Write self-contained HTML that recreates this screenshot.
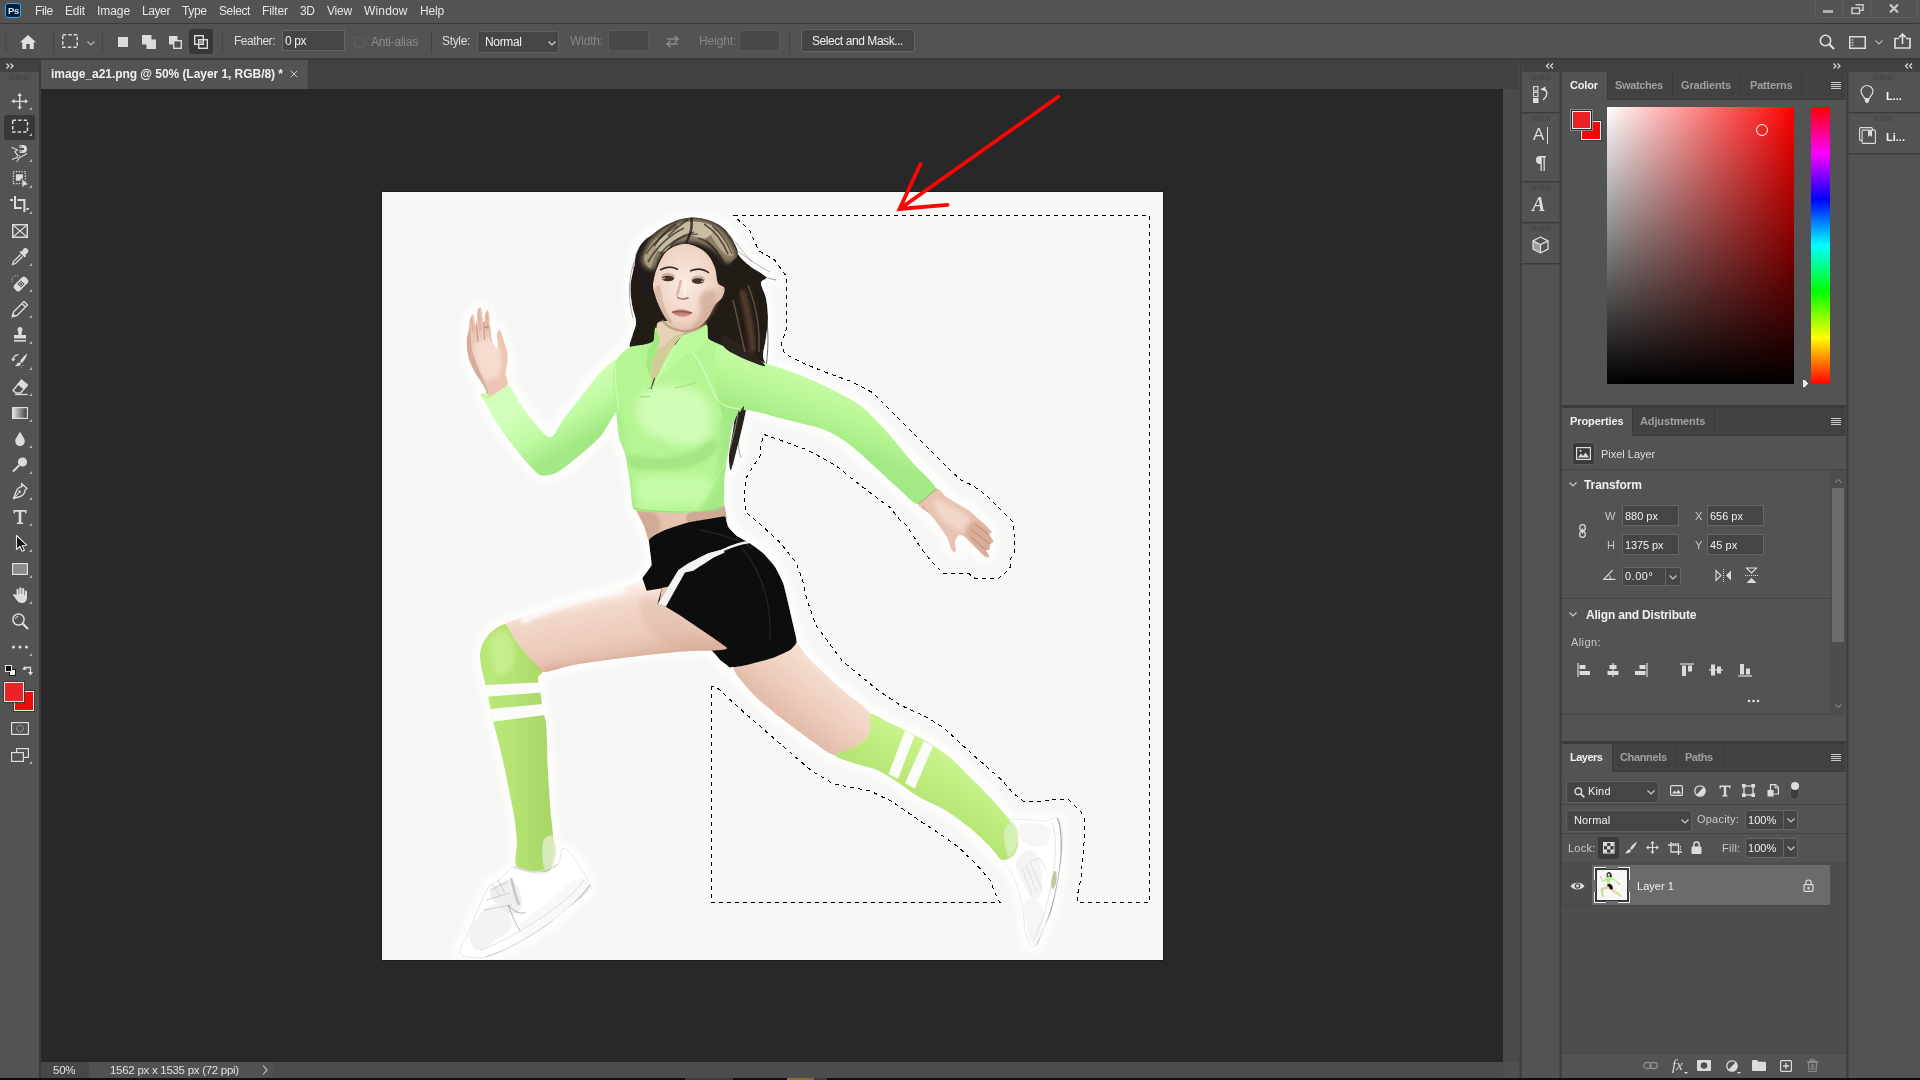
<!DOCTYPE html>
<html lang="en">
<head>
<meta charset="utf-8">
<title>image_a21.png @ 50% (Layer 1, RGB/8) *</title>
<style>
*{box-sizing:border-box;margin:0;padding:0}
html,body{width:1920px;height:1080px;overflow:hidden;background:#535353}
body{position:relative;font-family:"Liberation Sans","DejaVu Sans",sans-serif;font-size:12px;color:#dcdcdc;-webkit-font-smoothing:antialiased}
.a{position:absolute}
.t{position:absolute;white-space:nowrap;line-height:16px;height:16px;will-change:transform}
.b{font-weight:bold}
.dim{color:#8c8c8c}
.inp{position:absolute;background:#454545;border:1px solid #666}
.grip{position:absolute;height:5px;background:repeating-linear-gradient(90deg,#454545 0 1px,transparent 1px 2px)}
svg{position:absolute;overflow:visible}
/*SECTION-STYLES*/
</style>
</head>
<body>
<!-- ===== MENU BAR ===== -->
<div class="a" id="menubar" style="left:0;top:0;width:1920px;height:23px;background:#535353"></div>
<div class="a" style="left:0;top:23px;width:1920px;height:1px;background:#3a3a3a"></div>
<div class="a" style="left:5px;top:3px;width:16px;height:15px;background:#001e36;border:1px solid #31a8ff;border-radius:3px"></div>
<div class="t b" style="left:8px;top:3px;font-size:9.5px;line-height:15px;height:15px;color:#cfe9ff;letter-spacing:-0.3px">Ps</div>
<div class="t" style="left:35px;top:3px;color:#e6e6e6;letter-spacing:-0.41px">File</div>
<div class="t" style="left:65px;top:3px;color:#e6e6e6;letter-spacing:-0.17px">Edit</div>
<div class="t" style="left:97px;top:3px;color:#e6e6e6;letter-spacing:-0.07px">Image</div>
<div class="t" style="left:142px;top:3px;color:#e6e6e6;letter-spacing:-0.41px">Layer</div>
<div class="t" style="left:182px;top:3px;color:#e6e6e6;letter-spacing:-0.33px">Type</div>
<div class="t" style="left:219px;top:3px;color:#e6e6e6;letter-spacing:-0.39px">Select</div>
<div class="t" style="left:262px;top:3px;color:#e6e6e6;letter-spacing:-0.11px">Filter</div>
<div class="t" style="left:300px;top:3px;color:#e6e6e6;letter-spacing:-0.32px">3D</div>
<div class="t" style="left:327px;top:3px;color:#e6e6e6;letter-spacing:-0.20px">View</div>
<div class="t" style="left:364px;top:3px;color:#e6e6e6;letter-spacing:0.17px">Window</div>
<div class="t" style="left:420px;top:3px;color:#e6e6e6;letter-spacing:-0.17px">Help</div>
<div class="a" style="left:1815px;top:0;width:103px;height:18px;border:1px solid #5f5f5f;border-top:none;border-radius:0 0 4px 4px"></div>
<div class="a" style="left:1842px;top:0;width:1px;height:17px;background:#5f5f5f"></div>
<div class="a" style="left:1870px;top:0;width:1px;height:17px;background:#5f5f5f"></div>
<div class="a" style="left:1823px;top:10px;width:10px;height:3px;background:#b0b0b0"></div>
<svg style="left:1851px;top:4px" width="13" height="11" viewBox="0 0 13 11"><path d="M4.5 0.8h7.5v5.5h-2.5M1 4h7.5v5.500h-7.500z" fill="none" stroke="#c8c8c8" stroke-width="1.6"/></svg>
<svg style="left:1889px;top:4px" width="10" height="9" viewBox="0 0 10 9"><path d="M1 0.5L9 8.500M9 0.500L1 8.500" stroke="#c8c8c8" stroke-width="2.2" fill="none"/></svg>
<!--MENU-->

<!-- ===== OPTIONS BAR ===== -->
<div class="a" id="optbar" style="left:0;top:24px;width:1920px;height:35px;background:#535353"></div>
<div class="a" style="left:0;top:58px;width:1920px;height:2px;background:#3a3a3a"></div>

<div class="a" style="left:5px;top:32px;width:2px;height:20px;background:repeating-linear-gradient(180deg,#464646 0 1px,transparent 1px 2px)"></div>
<svg style="left:20px;top:35px" width="16" height="14" viewBox="0 0 16 14"><path d="M8 0L0 7.300h2.300V14h4V9h3.400v5h4V7.300H16z" fill="#e0e0e0"/></svg>
<div class="a" style="left:53px;top:30px;width:1px;height:23px;background:#454545"></div>
<svg style="left:62px;top:34px" width="16" height="14" viewBox="0 0 16 14"><rect x="0.750" y="0.750" width="14.500" height="12.500" fill="none" stroke="#dcdcdc" stroke-width="1.500" stroke-dasharray="3.500 2"/></svg>
<svg style="left:87px;top:41px" width="8" height="5" viewBox="0 0 8 5"><path d="M0.500 0.500L4 4l3.500-3.500" fill="none" stroke="#b4b4b4" stroke-width="1.200"/></svg>
<div class="a" style="left:102px;top:30px;width:1px;height:23px;background:#454545"></div>
<div class="a" style="left:118px;top:37px;width:10px;height:10px;background:#dcdcdc"></div>
<svg style="left:142px;top:35px" width="14" height="14" viewBox="0 0 14 14"><path d="M0 0h9.500v4.500H14V14H4.500V9.500H0z" fill="#dcdcdc"/></svg>
<svg style="left:169px;top:36px" width="13" height="13" viewBox="0 0 13 13"><path d="M0 0h8.500v4h-4.500v4.500H0z" fill="#dcdcdc"/><rect x="4.700" y="4.700" width="7.600" height="7.600" fill="none" stroke="#dcdcdc" stroke-width="1.400"/></svg>
<div class="a" style="left:189px;top:29px;width:24px;height:25px;background:#383838;border-radius:3px"></div>
<svg style="left:194px;top:35px" width="14" height="14" viewBox="0 0 14 14"><rect x="0.700" y="0.700" width="8.600" height="8.600" fill="none" stroke="#dcdcdc" stroke-width="1.400"/><rect x="4.700" y="4.700" width="8.600" height="8.600" fill="none" stroke="#dcdcdc" stroke-width="1.400"/><rect x="5.400" y="5.400" width="3.200" height="3.200" fill="#a0a0a0"/></svg>
<div class="a" style="left:222px;top:30px;width:1px;height:23px;background:#454545"></div>
<div class="t" style="left:234px;top:33px;letter-spacing:-0.46px">Feather:</div>
<div class="inp" style="left:282px;top:30px;width:63px;height:21px"></div>
<div class="t" style="left:285px;top:33px;color:#f0f0f0;letter-spacing:-0.42px">0 px</div>
<div class="a" style="left:354px;top:37px;width:11px;height:11px;border:1px solid #5e5e5e;border-radius:2px"></div>
<div class="t dim" style="left:371px;top:34px;letter-spacing:-0.24px">Anti-alias</div>
<div class="a" style="left:431px;top:30px;width:1px;height:23px;background:#454545"></div>
<div class="t" style="left:442px;top:33px;letter-spacing:-0.34px">Style:</div>
<div class="a" style="left:477px;top:31px;width:82px;height:22px;background:#454545;border:1px solid #606060;border-radius:3px"></div>
<div class="t" style="left:485px;top:34px;color:#f0f0f0;letter-spacing:-0.33px">Normal</div>
<svg style="left:548px;top:41px" width="8" height="5" viewBox="0 0 8 5"><path d="M0.500 0.500L4 4l3.500-3.500" fill="none" stroke="#d0d0d0" stroke-width="1.200"/></svg>
<div class="t dim" style="left:570px;top:33px;color:#868686;letter-spacing:-0.17px">Width:</div>
<div class="a" style="left:608px;top:30px;width:41px;height:21px;background:#484848;border:1px solid #5a5a5a"></div>
<svg style="left:665px;top:35px" width="15" height="13" viewBox="0 0 15 13"><path d="M2 4h11M9.500 0.800L13 4 9.500 7.200M13 9H2M5.500 5.800L2 9l3.500 3.200" fill="none" stroke="#8c8c8c" stroke-width="1.500"/></svg>
<div class="t dim" style="left:699px;top:33px;color:#868686;letter-spacing:-0.10px">Height:</div>
<div class="a" style="left:739px;top:30px;width:41px;height:21px;background:#484848;border:1px solid #5a5a5a"></div>
<div class="a" style="left:789px;top:30px;width:1px;height:23px;background:#454545"></div>
<div class="a" style="left:801px;top:29px;width:114px;height:23px;background:#454545;border:1px solid #646464;border-radius:3px"></div>
<div class="t" style="left:812px;top:33px;color:#f0f0f0;letter-spacing:-0.43px">Select and Mask...</div>
<svg style="left:1819px;top:34px" width="16" height="16" viewBox="0 0 16 16"><circle cx="6.500" cy="6.500" r="5.200" fill="none" stroke="#dcdcdc" stroke-width="1.600"/><path d="M10.300 10.300L15 15" stroke="#dcdcdc" stroke-width="2.200"/></svg>
<svg style="left:1849px;top:36px" width="17" height="13" viewBox="0 0 17 13"><rect x="0.750" y="0.750" width="15.500" height="11.500" fill="none" stroke="#dcdcdc" stroke-width="1.500"/><path d="M2.500 4h2M2.500 6.500h2M2.500 9h2" stroke="#dcdcdc" stroke-width="1.200"/></svg>
<svg style="left:1875px;top:40px" width="8" height="5" viewBox="0 0 8 5"><path d="M0.500 0.500L4 4l3.500-3.500" fill="none" stroke="#b4b4b4" stroke-width="1.200"/></svg>
<svg style="left:1894px;top:33px" width="17" height="16" viewBox="0 0 17 16"><path d="M5 5.500H1v9.500h15V5.500h-4" fill="none" stroke="#dcdcdc" stroke-width="1.700"/><path d="M8.500 11V1.500M5.300 4.300L8.500 1l3.200 3.300" fill="none" stroke="#dcdcdc" stroke-width="1.700"/></svg>
<!--OPTIONS-->

<!-- ===== TAB ROW / CANVAS ===== -->
<div class="a" style="left:0;top:60px;width:1920px;height:1020px;background:#424242"></div>
<div class="a" id="canvas" style="left:41px;top:89px;width:1462px;height:973px;background:#282828"></div>
<div class="a" style="left:41px;top:60px;width:267px;height:29px;background:#535353"></div>
<div class="a" style="left:308px;top:60px;width:1px;height:29px;background:#3c3c3c"></div>
<div class="t b" style="left:51px;top:66px;color:#f0f0f0;letter-spacing:-0.05px">image_a21.png @ 50% (Layer 1, RGB/8) *</div>
<svg style="left:290px;top:70px" width="8" height="8" viewBox="0 0 8 8"><path d="M0.800 0.800l6.400 6.400M7.200 0.800L0.800 7.200" stroke="#c8c8c8" stroke-width="1"/></svg>
<!--FIG-START-->
<div class="a" style="left:381px;top:191px;width:783px;height:770px;background:#1c1c1c"></div>
<svg style="left:382px;top:192px" width="781" height="768" viewBox="382 192 781 768">
<defs>
<filter id="b1" x="-10%" y="-10%" width="120%" height="120%"><feGaussianBlur stdDeviation="0.600"/></filter>
<filter id="b2" x="-20%" y="-20%" width="140%" height="140%"><feGaussianBlur stdDeviation="2"/></filter>
<filter id="b4" x="-30%" y="-30%" width="160%" height="160%"><feGaussianBlur stdDeviation="4"/></filter>
<filter id="b8" x="-30%" y="-30%" width="160%" height="160%"><feGaussianBlur stdDeviation="7"/></filter>
<linearGradient id="gTop" x1="0" y1="0" x2="1" y2="0.300"><stop offset="0" stop-color="#a8f088"/><stop offset="0.450" stop-color="#bdf99a"/><stop offset="1" stop-color="#a4ec84"/></linearGradient>
<linearGradient id="gArmR" gradientUnits="userSpaceOnUse" x1="800" y1="370" x2="780" y2="425"><stop offset="0" stop-color="#c6fca4"/><stop offset="0.500" stop-color="#b8f694"/><stop offset="1" stop-color="#a4ea84"/></linearGradient>
<linearGradient id="gArmL" gradientUnits="userSpaceOnUse" x1="540" y1="400" x2="570" y2="450"><stop offset="0" stop-color="#d2ffba"/><stop offset="0.550" stop-color="#bef9a0"/><stop offset="1" stop-color="#a2e884"/></linearGradient>
<linearGradient id="gThigh" gradientUnits="userSpaceOnUse" x1="600" y1="590" x2="615" y2="665"><stop offset="0" stop-color="#fdf3ee"/><stop offset="0.250" stop-color="#f2d7c9"/><stop offset="0.700" stop-color="#ebc9b8"/><stop offset="1" stop-color="#dcb3a0"/></linearGradient>
<linearGradient id="gThighB" gradientUnits="userSpaceOnUse" x1="830" y1="680" x2="790" y2="730"><stop offset="0" stop-color="#f4dccf"/><stop offset="0.500" stop-color="#edccbb"/><stop offset="1" stop-color="#e0b8a6"/></linearGradient>
<linearGradient id="gSockF" gradientUnits="userSpaceOnUse" x1="485" y1="700" x2="548" y2="700"><stop offset="0" stop-color="#b9e87a"/><stop offset="0.400" stop-color="#b6e474"/><stop offset="1" stop-color="#a9d868"/></linearGradient>
<linearGradient id="gSockB" gradientUnits="userSpaceOnUse" x1="940" y1="750" x2="905" y2="805"><stop offset="0" stop-color="#c9f48e"/><stop offset="0.500" stop-color="#bdec7c"/><stop offset="1" stop-color="#b2e270"/></linearGradient>
<filter id="halo" filterUnits="userSpaceOnUse" x="382" y="192" width="781" height="768"><feMorphology in="SourceAlpha" operator="dilate" radius="6" result="d"/><feGaussianBlur in="d" stdDeviation="3" result="bl"/><feFlood flood-color="#ffffff" flood-opacity="0.700" result="fl"/><feComposite in="fl" in2="bl" operator="in" result="h"/><feMerge><feMergeNode in="h"/><feMergeNode in="SourceGraphic"/></feMerge></filter>
<radialGradient id="gFace" cx="0.450" cy="0.450" r="0.650"><stop offset="0" stop-color="#fbece2"/><stop offset="0.650" stop-color="#efd2c2"/><stop offset="1" stop-color="#cfa58f"/></radialGradient>
</defs>
<rect x="382" y="192" width="781" height="768" fill="#f7f7f5"/>
<g filter="url(#halo)">
<path d="M639.0 248.0C640.7 244.2 642.8 242.2 645.0 240.0C647.2 237.8 649.0 237.2 652.0 235.0C655.0 232.8 658.7 229.5 663.0 227.0C667.3 224.5 673.0 221.6 678.0 220.0C683.0 218.4 688.0 217.5 693.0 217.5C698.0 217.5 703.2 218.4 708.0 220.0C712.8 221.6 718.0 223.8 722.0 227.0C726.0 230.2 729.3 234.5 732.0 239.0C734.7 243.5 735.0 249.5 738.0 254.0C741.0 258.5 745.3 262.2 750.0 266.0C754.7 269.8 764.2 274.2 766.0 277.0C767.8 279.8 761.0 279.5 761.0 283.0C761.0 286.5 764.8 292.2 766.0 298.0C767.2 303.8 768.0 311.3 768.0 318.0C768.0 324.7 766.8 331.8 766.0 338.0C765.2 344.2 763.2 350.5 763.0 355.0C762.8 359.5 766.7 364.2 765.0 365.0C763.3 365.8 756.8 361.5 753.0 360.0C749.2 358.5 746.7 357.3 742.0 356.0C737.3 354.7 732.0 353.3 725.0 352.0C718.0 350.7 710.8 349.2 700.0 348.0C689.2 346.8 669.5 345.5 660.0 345.0C650.5 344.5 648.0 344.7 643.0 345.0C638.0 345.3 631.8 348.7 630.0 347.0C628.2 345.3 631.5 339.2 632.5 335.0C633.5 330.8 636.1 327.0 636.0 322.0C635.9 317.0 632.9 311.2 632.0 305.0C631.1 298.8 630.0 292.0 630.5 285.0C631.0 278.0 633.6 269.2 635.0 263.0C636.4 256.8 637.3 251.8 639.0 248.0Z" fill="#211c19" filter="url(#b1)"/>
<path d="M742.0 350.0C746.2 350.0 758.3 355.0 760.0 360.0C761.7 365.0 754.0 373.3 752.0 380.0C750.0 386.7 749.3 393.3 748.0 400.0C746.7 406.7 745.7 412.5 744.0 420.0C742.3 427.5 740.2 436.7 738.0 445.0C735.8 453.3 732.5 468.3 731.0 470.0C729.5 471.7 728.7 461.7 729.0 455.0C729.3 448.3 731.8 438.3 733.0 430.0C734.2 421.7 735.2 413.3 736.0 405.0C736.8 396.7 738.2 387.5 738.0 380.0C737.8 372.5 734.3 365.0 735.0 360.0C735.7 355.0 737.8 350.0 742.0 350.0Z" fill="#2a221d" filter="url(#b1)"/>
<path d="M750 268C760 276 770 279 776 280" stroke="#2a221d" stroke-width="1" fill="none" opacity="0.700"/>
<path d="M762 300C769 320 769 345 766 367" stroke="#2a221d" stroke-width="1.200" fill="none" opacity="0.800"/>
<path d="M634 262C628 280 628 300 633 318" stroke="#2a221d" stroke-width="1" fill="none" opacity="0.600"/>
<path d="M617.0 360.0C613.7 358.4 604.9 367.9 600.0 373.0C595.1 378.1 584.9 391.7 580.0 398.0C575.1 404.3 567.0 414.7 563.0 420.0C559.0 425.3 554.3 437.7 550.0 437.5C545.7 437.3 535.2 423.4 531.0 418.5C526.8 413.6 521.6 405.0 518.5 400.5C515.4 396.0 511.5 386.3 508.0 385.0C504.5 383.7 495.6 389.7 492.0 391.0C488.4 392.3 481.9 393.0 481.0 394.5C480.1 396.0 483.5 399.3 485.0 402.0C486.5 404.7 489.3 410.6 492.0 415.0C494.7 419.4 501.5 430.1 505.0 435.0C508.5 439.9 514.7 447.9 518.0 452.0C521.3 456.1 526.9 462.9 530.0 466.0C533.1 469.1 537.4 474.6 541.0 475.5C544.6 476.4 551.8 475.2 557.0 472.5C562.2 469.8 574.3 459.7 580.0 455.0C585.7 450.3 595.7 441.9 600.0 437.0C604.3 432.1 609.6 421.9 612.0 418.0C614.4 414.1 616.3 412.4 618.0 408.0C619.7 403.6 625.1 391.4 625.0 385.0C624.9 378.6 620.3 361.6 617.0 360.0Z" fill="url(#gArmL)" />
<clipPath id="cW"><path d="M634.0 506.0L724.0 502.0L727.0 519.0L690.0 524.0L665.0 532.0L649.0 542.0L644.0 526.0Z"/></clipPath>
<path d="M634.0 506.0L724.0 502.0L727.0 519.0L690.0 524.0L665.0 532.0L649.0 542.0L644.0 526.0Z" fill="#e6c3ae" />
<g clip-path="url(#cW)">
<path d="M634.0 510.0C636.7 507.3 651.7 510.7 656.0 514.0C660.3 517.3 661.3 525.0 660.0 530.0C658.7 535.0 651.3 544.0 648.0 544.0C644.7 544.0 642.3 535.7 640.0 530.0C637.7 524.3 631.3 512.7 634.0 510.0Z" fill="#c39a84" opacity="0.600" filter="url(#b2)"/>
<path d="M690.0 512.0C695.7 509.0 719.7 505.7 726.0 507.0C732.3 508.3 733.7 517.0 728.0 520.0C722.3 523.0 698.3 526.3 692.0 525.0C685.7 523.7 684.3 515.0 690.0 512.0Z" fill="#b8907a" opacity="0.500" filter="url(#b1)"/>
</g>
<clipPath id="cT"><path d="M656.0 327.5C653.5 327.0 655.1 339.0 653.5 341.0C651.9 343.0 644.7 344.3 642.0 345.0C639.3 345.7 632.6 345.8 630.0 347.0C627.4 348.2 621.8 353.1 620.0 355.0C618.2 356.9 615.8 359.5 615.0 363.0C614.2 366.5 612.9 379.5 613.0 385.0C613.1 390.5 615.3 403.9 616.0 410.0C616.7 416.1 617.9 431.7 619.0 437.0C620.1 442.3 624.2 450.1 625.5 455.5C626.8 460.9 629.1 476.9 630.0 483.0C630.9 489.1 631.4 504.7 633.0 508.0C634.6 511.3 638.8 510.9 644.0 511.5C649.2 512.1 671.5 513.0 678.0 513.0C684.5 513.0 694.8 512.2 700.0 511.5C705.2 510.8 719.7 510.9 722.5 507.0C725.3 503.1 723.8 484.0 724.4 478.0C725.0 472.0 726.9 461.3 727.8 455.5C728.7 449.7 730.8 433.0 732.0 428.0C733.2 423.0 735.9 416.3 738.0 413.0C740.1 409.7 746.9 403.6 750.0 400.0C753.1 396.4 763.2 386.2 765.0 382.0C766.8 377.8 767.3 367.3 765.0 364.0C762.7 360.7 748.7 355.6 745.0 354.0C741.3 352.4 736.3 351.3 733.0 350.0C729.7 348.7 719.6 344.4 716.7 343.0C713.8 341.6 709.2 340.1 708.0 338.0C706.8 335.9 708.8 325.6 706.7 325.0C704.6 324.4 693.7 330.7 690.0 333.0C686.3 335.3 679.0 345.6 675.0 345.0C671.0 344.4 658.5 328.0 656.0 327.5Z"/></clipPath>
<path d="M656.0 327.5C653.5 327.0 655.1 339.0 653.5 341.0C651.9 343.0 644.7 344.3 642.0 345.0C639.3 345.7 632.6 345.8 630.0 347.0C627.4 348.2 621.8 353.1 620.0 355.0C618.2 356.9 615.8 359.5 615.0 363.0C614.2 366.5 612.9 379.5 613.0 385.0C613.1 390.5 615.3 403.9 616.0 410.0C616.7 416.1 617.9 431.7 619.0 437.0C620.1 442.3 624.2 450.1 625.5 455.5C626.8 460.9 629.1 476.9 630.0 483.0C630.9 489.1 631.4 504.7 633.0 508.0C634.6 511.3 638.8 510.9 644.0 511.5C649.2 512.1 671.5 513.0 678.0 513.0C684.5 513.0 694.8 512.2 700.0 511.5C705.2 510.8 719.7 510.9 722.5 507.0C725.3 503.1 723.8 484.0 724.4 478.0C725.0 472.0 726.9 461.3 727.8 455.5C728.7 449.7 730.8 433.0 732.0 428.0C733.2 423.0 735.9 416.3 738.0 413.0C740.1 409.7 746.9 403.6 750.0 400.0C753.1 396.4 763.2 386.2 765.0 382.0C766.8 377.8 767.3 367.3 765.0 364.0C762.7 360.7 748.7 355.6 745.0 354.0C741.3 352.4 736.3 351.3 733.0 350.0C729.7 348.7 719.6 344.4 716.7 343.0C713.8 341.6 709.2 340.1 708.0 338.0C706.8 335.9 708.8 325.6 706.7 325.0C704.6 324.4 693.7 330.7 690.0 333.0C686.3 335.3 679.0 345.6 675.0 345.0C671.0 344.4 658.5 328.0 656.0 327.5Z" fill="#b6f593" />
<g clip-path="url(#cT)">
<path d="M640.0 395.0C644.2 388.3 655.0 385.5 665.0 385.0C675.0 384.5 692.2 386.2 700.0 392.0C707.8 397.8 712.0 411.2 712.0 420.0C712.0 428.8 707.8 441.7 700.0 445.0C692.2 448.3 675.0 443.3 665.0 440.0C655.0 436.7 644.2 432.5 640.0 425.0C635.8 417.5 635.8 401.7 640.0 395.0Z" fill="#d6ffbe" opacity="0.800" filter="url(#b4)"/>
<path d="M628.0 455.0C632.7 453.3 649.7 458.5 660.0 458.0C670.3 457.5 681.3 455.0 690.0 452.0C698.7 449.0 707.7 440.0 712.0 440.0C716.3 440.0 719.3 447.7 716.0 452.0C712.7 456.3 701.3 463.0 692.0 466.0C682.7 469.0 670.0 469.7 660.0 470.0C650.0 470.3 637.3 470.5 632.0 468.0C626.7 465.5 623.3 456.7 628.0 455.0Z" fill="#9fe07f" opacity="0.750" filter="url(#b2)"/>
<path d="M640.0 478.0C648.0 473.3 678.3 475.7 690.0 476.0C701.7 476.3 707.0 476.0 710.0 480.0C713.0 484.0 713.0 495.7 708.0 500.0C703.0 504.3 691.0 505.3 680.0 506.0C669.0 506.7 648.7 508.7 642.0 504.0C635.3 499.3 632.0 482.7 640.0 478.0Z" fill="#cbfdb0" opacity="0.700" filter="url(#b4)"/>
<path d="M722.0 420.0C726.0 408.3 738.3 401.7 740.0 410.0C741.7 418.3 734.7 453.7 732.0 470.0C729.3 486.3 729.3 501.0 724.0 508.0C718.7 515.0 701.3 516.7 700.0 512.0C698.7 507.3 712.3 495.3 716.0 480.0C719.7 464.7 718.0 431.7 722.0 420.0Z" fill="#a4e686" opacity="0.800" filter="url(#b2)"/>
<path d="M612.0 400.0C613.3 396.7 619.0 408.3 622.0 420.0C625.0 431.7 627.7 455.0 630.0 470.0C632.3 485.0 636.7 503.3 636.0 510.0C635.3 516.7 629.7 521.7 626.0 510.0C622.3 498.3 616.3 458.3 614.0 440.0C611.7 421.7 610.7 403.3 612.0 400.0Z" fill="#a8ea8a" opacity="0.700" filter="url(#b2)"/>
<path d="M633 508.500C650 511.500 680 513 700 511.500C710 510.500 718 509 723 507" stroke="#93d977" stroke-width="1.400" fill="none" opacity="0.800"/>
</g>
<path d="M717.0 347.0C720.3 343.4 734.0 351.0 740.0 353.0C746.0 355.0 754.0 359.1 762.0 362.0C770.0 364.9 790.0 371.0 800.0 375.0C810.0 379.0 828.7 387.7 837.0 392.0C845.3 396.3 855.3 401.7 862.0 407.0C868.7 412.3 880.3 424.7 887.0 432.0C893.7 439.3 905.5 454.4 912.0 462.0C918.5 469.6 935.3 483.4 936.0 489.0C936.7 494.6 922.3 503.9 917.5 504.0C912.7 504.1 905.7 494.9 900.0 490.0C894.3 485.1 881.7 473.0 875.0 467.0C868.3 461.0 856.7 449.9 850.0 445.0C843.3 440.1 833.4 433.3 825.0 430.0C816.6 426.7 797.7 422.7 787.0 420.0C776.3 417.3 753.3 410.0 745.0 410.0C736.7 410.0 729.0 424.0 725.0 420.0C721.0 416.0 716.1 389.7 715.0 380.0C713.9 370.3 713.7 350.6 717.0 347.0Z" fill="url(#gArmR)" />
<path d="M722.0 335.0C725.0 334.7 736.3 341.5 742.0 345.0C747.7 348.5 752.2 352.5 756.0 356.0C759.8 359.5 765.7 365.0 765.0 366.0C764.3 367.0 756.5 363.7 752.0 362.0C747.5 360.3 742.7 358.5 738.0 356.0C733.3 353.5 726.7 350.5 724.0 347.0C721.3 343.5 719.0 335.3 722.0 335.0Z" fill="#2a221d" filter="url(#b1)"/>
<path d="M744.0 406.0C744.5 406.8 742.5 417.7 741.0 425.0C739.5 432.3 736.7 442.5 735.0 450.0C733.3 457.5 731.2 470.8 731.0 470.0C730.8 469.2 732.8 453.3 734.0 445.0C735.2 436.7 736.3 426.5 738.0 420.0C739.7 413.5 743.5 405.2 744.0 406.0Z" fill="#2a221d" opacity="0.900"/>
<path d="M742 408C740 425 736 445 741 458M739 410C734 430 732 450 733 465" stroke="#2a221d" stroke-width="0.900" fill="none" opacity="0.700"/>
<path d="M659.0 322.0C653.9 324.1 658.7 334.7 658.5 338.0C658.3 341.3 657.8 347.0 657.0 350.0C656.2 353.0 652.6 360.5 652.0 364.0C651.4 367.5 651.1 378.0 651.5 380.0C651.9 382.0 653.2 383.8 655.0 381.0C656.8 378.2 663.9 361.2 667.0 356.0C670.1 350.8 678.4 339.0 681.7 336.0C685.0 333.0 692.6 331.9 695.0 330.0C697.4 328.1 706.2 320.9 702.0 320.0C697.8 319.1 664.1 319.9 659.0 322.0Z" fill="#d4cc98" />
<path d="M659.0 322.0C654.2 323.9 658.9 334.7 658.5 338.0C658.1 341.3 655.4 349.1 656.0 350.0C656.6 350.9 661.9 347.6 664.0 346.0C666.1 344.4 670.7 337.9 674.0 336.0C677.3 334.1 689.0 331.6 692.0 330.0C695.0 328.4 703.9 322.9 700.0 322.0C696.1 321.1 663.8 320.1 659.0 322.0Z" fill="#ead2bc" opacity="0.850"/>
<path d="M656.0 327.5L660.0 340.0L656.0 352.0L651.0 366.0L651.0 378.0L646.0 365.0L648.0 350.0L653.5 341.0Z" fill="#a2e884" />
<path d="M706.7 325.0L708.0 338.0L702.0 346.0L684.0 356.0L664.0 374.0L655.0 382.0L667.0 356.0L681.7 336.0Z" fill="#bdfa9c" />
<path d="M706.700 325L681.700 336L655 382" stroke="#d8ffc8" stroke-width="0.800" fill="none" opacity="0.900"/>
<path d="M654.500 378L651 389" stroke="#46583c" stroke-width="1.300"/>
<path d="M640 397L650 396.500M647 389L653 386.500" stroke="#86c870" stroke-width="0.900" opacity="0.800"/>
<path d="M675 388C683 386 690 384.500 697 382" stroke="#8ed474" stroke-width="0.900" fill="none" opacity="0.800"/>
<path d="M692 352C702 362 708 380 716 398C722 406 730 408 740 409" stroke="#e4ffd8" stroke-width="1" fill="none" opacity="0.950"/>
<path d="M616 364C614 380 617 395 619 410" stroke="#dcffca" stroke-width="0.900" fill="none" opacity="0.800"/>
<path d="M738 414C733 440 728 460 716 480C708 492 700 500 690 512" stroke="#d2fbbc" stroke-width="0.800" fill="none" opacity="0.700"/>
<path d="M683.0 244.0C678.0 244.7 671.2 247.2 667.0 251.0C662.8 254.8 659.8 261.7 657.5 267.0C655.2 272.3 653.4 278.3 653.0 283.0C652.6 287.7 653.8 290.8 655.0 295.0C656.2 299.2 658.0 303.8 660.0 308.0C662.0 312.2 664.5 316.7 667.0 320.0C669.5 323.3 671.7 325.8 675.0 328.0C678.3 330.2 683.2 333.0 687.0 333.0C690.8 333.0 694.5 330.5 698.0 328.0C701.5 325.5 705.2 321.8 708.0 318.0C710.8 314.2 712.7 308.3 715.0 305.0C717.3 301.7 720.4 300.8 722.0 298.0C723.6 295.2 725.2 290.5 724.5 288.0C723.8 285.5 719.6 286.3 718.0 283.0C716.4 279.7 716.7 272.7 715.0 268.0C713.3 263.3 711.0 258.5 708.0 255.0C705.0 251.5 701.2 248.8 697.0 247.0C692.8 245.2 688.0 243.3 683.0 244.0Z" fill="url(#gFace)" />
<path d="M700.0 296.0C702.3 291.8 711.3 288.7 714.0 290.0C716.7 291.3 717.0 299.3 716.0 304.0C715.0 308.7 711.0 314.0 708.0 318.0C705.0 322.0 701.0 326.0 698.0 328.0C695.0 330.0 689.7 332.2 690.0 330.0C690.3 327.8 698.3 320.7 700.0 315.0C701.7 309.3 697.7 300.2 700.0 296.0Z" fill="#c49a84" opacity="0.550" filter="url(#b2)"/>
<path d="M655.0 290.0C655.0 286.3 658.5 283.5 660.0 286.0C661.5 288.5 662.0 299.0 664.0 305.0C666.0 311.0 671.3 319.2 672.0 322.0C672.7 324.8 670.0 324.3 668.0 322.0C666.0 319.7 662.2 313.3 660.0 308.0C657.8 302.7 655.0 293.7 655.0 290.0Z" fill="#c9a490" opacity="0.500" filter="url(#b1)"/>
<clipPath id="cH"><path d="M639.0 248.0C640.7 244.2 642.8 242.2 645.0 240.0C647.2 237.8 649.0 237.2 652.0 235.0C655.0 232.8 658.7 229.5 663.0 227.0C667.3 224.5 673.0 221.6 678.0 220.0C683.0 218.4 688.0 217.5 693.0 217.5C698.0 217.5 703.2 218.4 708.0 220.0C712.8 221.6 718.0 223.8 722.0 227.0C726.0 230.2 729.3 234.5 732.0 239.0C734.7 243.5 738.3 249.8 738.0 254.0C737.7 258.2 732.8 261.0 730.0 264.0C727.2 267.0 723.7 273.0 721.0 272.0C718.3 271.0 717.2 262.0 714.0 258.0C710.8 254.0 706.8 250.4 702.0 248.0C697.2 245.6 690.7 243.3 685.0 243.5C679.3 243.7 672.5 245.9 668.0 249.0C663.5 252.1 660.3 257.2 658.0 262.0C655.7 266.8 655.5 271.7 654.0 278.0C652.5 284.3 651.2 297.7 649.0 300.0C646.8 302.3 643.3 298.2 641.0 292.0C638.7 285.8 635.3 270.3 635.0 263.0C634.7 255.7 637.3 251.8 639.0 248.0Z"/></clipPath>
<path d="M639.0 248.0C640.7 244.2 642.8 242.2 645.0 240.0C647.2 237.8 649.0 237.2 652.0 235.0C655.0 232.8 658.7 229.5 663.0 227.0C667.3 224.5 673.0 221.6 678.0 220.0C683.0 218.4 688.0 217.5 693.0 217.5C698.0 217.5 703.2 218.4 708.0 220.0C712.8 221.6 718.0 223.8 722.0 227.0C726.0 230.2 729.3 234.5 732.0 239.0C734.7 243.5 738.3 249.8 738.0 254.0C737.7 258.2 732.8 261.0 730.0 264.0C727.2 267.0 723.7 273.0 721.0 272.0C718.3 271.0 717.2 262.0 714.0 258.0C710.8 254.0 706.8 250.4 702.0 248.0C697.2 245.6 690.7 243.3 685.0 243.5C679.3 243.7 672.5 245.9 668.0 249.0C663.5 252.1 660.3 257.2 658.0 262.0C655.7 266.8 655.5 271.7 654.0 278.0C652.5 284.3 651.2 297.7 649.0 300.0C646.8 302.3 643.3 298.2 641.0 292.0C638.7 285.8 635.3 270.3 635.0 263.0C634.7 255.7 637.3 251.8 639.0 248.0Z" fill="#241e1a" filter="url(#b1)"/>
<g clip-path="url(#cH)">
<path d="M642.0 262.0C641.2 257.7 645.0 249.2 648.0 244.0C651.0 238.8 655.3 234.7 660.0 231.0C664.7 227.3 670.5 224.2 676.0 222.0C681.5 219.8 687.5 218.2 693.0 218.0C698.5 217.8 704.2 219.2 709.0 221.0C713.8 222.8 718.3 225.7 722.0 229.0C725.7 232.3 728.5 236.5 731.0 241.0C733.5 245.5 737.7 252.3 737.0 256.0C736.3 259.7 730.7 263.8 727.0 263.0C723.3 262.2 719.3 254.2 715.0 251.0C710.7 247.8 706.0 245.5 701.0 244.0C696.0 242.5 690.2 241.5 685.0 242.0C679.8 242.5 674.2 244.5 670.0 247.0C665.8 249.5 662.8 253.2 660.0 257.0C657.2 260.8 656.0 269.2 653.0 270.0C650.0 270.8 642.8 266.3 642.0 262.0Z" fill="#a89878" opacity="0.800" filter="url(#b2)"/>
<path d="M656.0 246.0C656.7 242.7 663.3 235.8 668.0 232.0C672.7 228.2 678.7 224.7 684.0 223.0C689.3 221.3 695.0 221.2 700.0 222.0C705.0 222.8 713.0 225.3 714.0 228.0C715.0 230.7 710.0 236.7 706.0 238.0C702.0 239.3 695.0 235.7 690.0 236.0C685.0 236.3 680.3 237.3 676.0 240.0C671.7 242.7 667.3 251.0 664.0 252.0C660.7 253.0 655.3 249.3 656.0 246.0Z" fill="#ddd2b6" opacity="0.750" filter="url(#b1)"/>
<path d="M708.0 228.0C708.5 226.3 714.7 229.3 718.0 232.0C721.3 234.7 725.5 240.2 728.0 244.0C730.5 247.8 733.7 253.5 733.0 255.0C732.3 256.5 727.0 255.2 724.0 253.0C721.0 250.8 717.7 246.2 715.0 242.0C712.3 237.8 707.5 229.7 708.0 228.0Z" fill="#cabea0" opacity="0.700" filter="url(#b1)"/>
<path d="M644.0 258.0C644.0 254.3 647.7 249.3 650.0 246.0C652.3 242.7 656.3 238.0 658.0 238.0C659.7 238.0 660.7 242.7 660.0 246.0C659.3 249.3 655.7 254.3 654.0 258.0C652.3 261.7 651.7 268.0 650.0 268.0C648.3 268.0 644.0 261.7 644.0 258.0Z" fill="#bcb092" opacity="0.650" filter="url(#b1)"/>
<path d="M648 262C656 248 668 236 684 228M660 254C668 244 680 236 694 232M704 224C714 230 722 240 728 254M698 238C708 241 716 249 722 262M676 224C668 229 660 237 654 246M688 219C682 224 674 230 668 236" stroke="#2c241e" stroke-width="1.700" fill="none" opacity="0.700" filter="url(#b1)"/>
<path d="M646 254C654 242 664 233 678 226M670 246C678 238 688 234 698 234M712 226C720 232 727 242 732 254M706 240C714 246 720 254 724 264M660 262C664 254 670 248 678 244" stroke="#2c241e" stroke-width="1.400" fill="none" opacity="0.600" filter="url(#b1)"/>
<path d="M691 217C693 226 691 234 686 243" stroke="#1c1612" stroke-width="2.600" fill="none" opacity="0.750" filter="url(#b1)"/>
</g>
<path d="M742 290C748 312 752 335 753 352" stroke="#6b4a3c" stroke-width="6" fill="none" opacity="0.800" filter="url(#b2)"/>
<path d="M733 300C738 320 742 340 745 352M748 285C756 305 760 330 759 352" stroke="#8a7060" stroke-width="1.500" fill="none" opacity="0.600" filter="url(#b1)"/>
<path d="M640 250C636 256 634 262 633 270M646 240C641 244 637 250 635 256M730 236C738 244 744 254 752 262M736 250C748 258 758 266 770 272" stroke="#2c241e" stroke-width="0.900" fill="none" opacity="0.600"/>
<ellipse cx="668" cy="278.500" rx="6" ry="2.800" fill="#2a1c16" filter="url(#b1)"/><ellipse cx="698" cy="281" rx="6" ry="2.800" fill="#2a1c16" filter="url(#b1)"/>
<ellipse cx="668" cy="277" rx="7" ry="4" fill="#7a5a4c" opacity="0.350" filter="url(#b1)"/><ellipse cx="698" cy="279.500" rx="7" ry="4" fill="#7a5a4c" opacity="0.350" filter="url(#b1)"/>
<path d="M662.500 279L665 278M701 281.500L703.500 281" stroke="#f4ece6" stroke-width="1.200" fill="none" opacity="0.900"/>
<path d="M660 270C666 266.500 673 266.500 678 269.500" stroke="#3a2a22" stroke-width="1.600" fill="none"/><path d="M690 271C697 268 704 269 709 273" stroke="#3a2a22" stroke-width="1.600" fill="none"/>
<path d="M681 280C679.500 287 678 292 677 295.500" stroke="#c79a86" stroke-width="2.600" fill="none" opacity="0.600" filter="url(#b1)"/>
<path d="M677 297C679.500 299.300 685 299.800 688.500 297.500" stroke="#8e5f50" stroke-width="1.500" fill="none" opacity="0.800" filter="url(#b1)"/>
<path d="M684.500 280C685.500 287 685.500 292 684.500 296" stroke="#fff6f0" stroke-width="2" fill="none" opacity="0.700" filter="url(#b1)"/>
<path d="M671.500 312C677 308 686 308.500 692.500 313C686 318.500 677 318 671.500 312Z" fill="#c08474"/>
<path d="M672 312.200C678 311.200 686 311.600 692 313" stroke="#7a4038" stroke-width="0.900" fill="none"/>
<path d="M674 314.500C680 316.500 686 316.500 690 315" stroke="#e8b4a8" stroke-width="1" fill="none" opacity="0.800"/>
<path d="M662 320C670 331 690 337 706 323" stroke="#a88468" stroke-width="2.500" fill="none" opacity="0.600" filter="url(#b1)"/>
<clipPath id="cHL"><path d="M471.9 314.7C471.5 315.5 469.9 319.6 469.5 321.3C469.1 323.1 469.2 327.8 468.9 329.7C468.6 331.6 467.2 335.6 467.0 338.0C466.8 340.4 466.6 347.2 467.0 350.0C467.4 352.8 468.9 359.2 470.0 362.0C471.1 364.8 474.4 371.3 476.0 374.0C477.6 376.7 481.7 382.4 483.3 385.0C484.9 387.6 487.5 395.8 489.3 396.5C491.1 397.2 496.8 392.5 499.0 391.0C501.2 389.5 507.2 386.0 508.0 384.0C508.8 382.0 505.7 376.6 505.6 374.0C505.5 371.4 507.2 364.5 507.4 362.0C507.6 359.5 507.8 355.1 507.4 352.6C507.0 350.1 504.7 343.3 503.8 340.5C502.9 337.7 500.4 329.7 499.6 329.0C498.8 328.3 497.2 332.8 497.0 334.5C496.8 336.2 497.8 342.3 497.8 344.0C497.8 345.7 497.3 349.4 496.6 349.0C495.9 348.6 492.5 343.2 491.7 340.5C490.9 337.8 490.3 329.1 490.0 326.0C489.7 322.9 489.6 315.9 489.3 314.0C489.0 312.1 488.0 309.8 487.5 309.9C487.0 310.0 485.4 313.5 485.0 315.0C484.6 316.5 484.5 322.6 484.2 323.0C483.9 323.4 483.0 319.6 482.7 318.0C482.4 316.4 481.9 310.2 481.5 309.0C481.1 307.8 480.2 307.2 479.7 307.4C479.2 307.6 477.8 309.0 477.5 310.5C477.2 312.0 477.0 318.3 476.8 320.0C476.6 321.7 475.8 325.3 475.5 325.0C475.2 324.7 474.6 319.0 474.3 317.7C474.0 316.4 473.5 314.6 473.2 314.2C472.9 313.8 472.3 313.9 471.9 314.7Z"/></clipPath>
<path d="M471.9 314.7C471.5 315.5 469.9 319.6 469.5 321.3C469.1 323.1 469.2 327.8 468.9 329.7C468.6 331.6 467.2 335.6 467.0 338.0C466.8 340.4 466.6 347.2 467.0 350.0C467.4 352.8 468.9 359.2 470.0 362.0C471.1 364.8 474.4 371.3 476.0 374.0C477.6 376.7 481.7 382.4 483.3 385.0C484.9 387.6 487.5 395.8 489.3 396.5C491.1 397.2 496.8 392.5 499.0 391.0C501.2 389.5 507.2 386.0 508.0 384.0C508.8 382.0 505.7 376.6 505.6 374.0C505.5 371.4 507.2 364.5 507.4 362.0C507.6 359.5 507.8 355.1 507.4 352.6C507.0 350.1 504.7 343.3 503.8 340.5C502.9 337.7 500.4 329.7 499.6 329.0C498.8 328.3 497.2 332.8 497.0 334.5C496.8 336.2 497.8 342.3 497.8 344.0C497.8 345.7 497.3 349.4 496.6 349.0C495.9 348.6 492.5 343.2 491.7 340.5C490.9 337.8 490.3 329.1 490.0 326.0C489.7 322.9 489.6 315.9 489.3 314.0C489.0 312.1 488.0 309.8 487.5 309.9C487.0 310.0 485.4 313.5 485.0 315.0C484.6 316.5 484.5 322.6 484.2 323.0C483.9 323.4 483.0 319.6 482.7 318.0C482.4 316.4 481.9 310.2 481.5 309.0C481.1 307.8 480.2 307.2 479.7 307.4C479.2 307.6 477.8 309.0 477.5 310.5C477.2 312.0 477.0 318.3 476.8 320.0C476.6 321.7 475.8 325.3 475.5 325.0C475.2 324.7 474.6 319.0 474.3 317.7C474.0 316.4 473.5 314.6 473.2 314.2C472.9 313.8 472.3 313.9 471.9 314.7Z" fill="#ecc6b4" />
<g clip-path="url(#cHL)">
<path d="M474.0 345.0C475.7 340.3 483.7 337.2 488.0 338.0C492.3 338.8 498.0 344.3 500.0 350.0C502.0 355.7 502.0 367.0 500.0 372.0C498.0 377.0 491.7 381.0 488.0 380.0C484.3 379.0 480.3 371.8 478.0 366.0C475.7 360.2 472.3 349.7 474.0 345.0Z" fill="#f7e0d4" opacity="0.850" filter="url(#b2)"/>
<path d="M466.0 330.0C466.0 323.7 469.0 324.7 470.0 328.0C471.0 331.3 470.3 342.7 472.0 350.0C473.7 357.3 477.3 365.0 480.0 372.0C482.7 379.0 487.7 388.3 488.0 392.0C488.3 395.7 485.0 398.3 482.0 394.0C479.0 389.7 472.7 376.7 470.0 366.0C467.3 355.3 466.0 336.3 466.0 330.0Z" fill="#c99c88" opacity="0.600" filter="url(#b1)"/>
<path d="M476.500 325L478 342M483.800 322L484.500 340M490 326L491.500 341" stroke="#b98470" stroke-width="1" fill="none" opacity="0.800"/>
<path d="M470 314L473.500 332M478.500 309L480.500 330M486.500 311L487.500 331" stroke="#dcae9c" stroke-width="2.600" fill="none" opacity="0.700" filter="url(#b1)"/>
<path d="M484.500 327.500L488.500 326.500" stroke="#8a5a48" stroke-width="0.900" fill="none" opacity="0.800"/>
</g>
<path d="M481 394C485 397.500 489 398 492 396.500" stroke="#d8f08a" stroke-width="2" fill="none"/>
<clipPath id="cHR"><path d="M936.7 488.8C939.9 487.9 943.4 494.8 945.8 496.5C948.2 498.2 954.3 501.9 957.0 503.6C959.7 505.3 966.9 509.0 969.3 510.7C971.7 512.4 975.4 516.1 977.4 517.9C979.4 519.7 984.9 524.3 986.6 526.0C988.3 527.7 991.4 531.1 991.7 532.1C992.0 533.1 988.8 533.4 989.0 534.5C989.2 535.6 993.6 540.1 993.7 541.3C993.8 542.5 990.5 543.5 990.0 544.5C989.5 545.5 990.1 548.8 989.6 549.5C989.1 550.2 986.0 549.7 986.0 550.5C986.0 551.3 989.6 555.8 989.6 556.6C989.6 557.4 986.8 557.7 985.6 557.1C984.4 556.5 981.2 553.1 979.5 551.5C977.8 549.9 973.0 545.0 971.3 543.3C969.6 541.6 966.6 538.1 965.2 537.2C963.8 536.3 960.3 534.7 959.1 535.2C957.9 535.7 955.4 539.6 955.0 541.3C954.6 543.0 956.1 548.2 956.0 549.5C955.9 550.8 954.6 552.6 954.0 552.5C953.4 552.4 951.6 549.9 950.9 548.4C950.2 546.9 948.8 541.3 947.9 539.3C947.0 537.3 944.2 533.2 942.8 531.1C941.4 529.0 937.4 523.0 935.7 520.9C934.0 518.8 930.5 514.8 928.5 512.8C926.5 510.8 917.3 506.9 918.3 504.1C919.3 501.3 933.5 489.7 936.7 488.8Z"/></clipPath>
<path d="M936.7 488.8C939.9 487.9 943.4 494.8 945.8 496.5C948.2 498.2 954.3 501.9 957.0 503.6C959.7 505.3 966.9 509.0 969.3 510.7C971.7 512.4 975.4 516.1 977.4 517.9C979.4 519.7 984.9 524.3 986.6 526.0C988.3 527.7 991.4 531.1 991.7 532.1C992.0 533.1 988.8 533.4 989.0 534.5C989.2 535.6 993.6 540.1 993.7 541.3C993.8 542.5 990.5 543.5 990.0 544.5C989.5 545.5 990.1 548.8 989.6 549.5C989.1 550.2 986.0 549.7 986.0 550.5C986.0 551.3 989.6 555.8 989.6 556.6C989.6 557.4 986.8 557.7 985.6 557.1C984.4 556.5 981.2 553.1 979.5 551.5C977.8 549.9 973.0 545.0 971.3 543.3C969.6 541.6 966.6 538.1 965.2 537.2C963.8 536.3 960.3 534.7 959.1 535.2C957.9 535.7 955.4 539.6 955.0 541.3C954.6 543.0 956.1 548.2 956.0 549.5C955.9 550.8 954.6 552.6 954.0 552.5C953.4 552.4 951.6 549.9 950.9 548.4C950.2 546.9 948.8 541.3 947.9 539.3C947.0 537.3 944.2 533.2 942.8 531.1C941.4 529.0 937.4 523.0 935.7 520.9C934.0 518.8 930.5 514.8 928.5 512.8C926.5 510.8 917.3 506.9 918.3 504.1C919.3 501.3 933.5 489.7 936.7 488.8Z" fill="#e9c3b0" />
<g clip-path="url(#cHR)">
<path d="M935.0 500.0C937.8 499.0 949.2 504.7 955.0 508.0C960.8 511.3 968.2 516.0 970.0 520.0C971.8 524.0 969.3 531.0 966.0 532.0C962.7 533.0 954.7 529.0 950.0 526.0C945.3 523.0 940.5 518.3 938.0 514.0C935.5 509.7 932.2 501.0 935.0 500.0Z" fill="#f4dccf" opacity="0.800" filter="url(#b2)"/>
<path d="M966.0 526.0C968.0 523.0 975.3 519.7 980.0 522.0C984.7 524.3 992.3 534.0 994.0 540.0C995.7 546.0 992.7 556.0 990.0 558.0C987.3 560.0 981.7 555.0 978.0 552.0C974.3 549.0 970.0 544.3 968.0 540.0C966.0 535.7 964.0 529.0 966.0 526.0Z" fill="#c79682" opacity="0.500" filter="url(#b2)"/>
<path d="M975 524L990 536M972 530L991 545M970 536L988 552" stroke="#a8735f" stroke-width="1" fill="none" opacity="0.600"/>
<path d="M922 506C930 514 940 528 948 542" stroke="#cfa08c" stroke-width="2" fill="none" opacity="0.600" filter="url(#b1)"/>
</g>
<path d="M936.700 488.800L918.300 504.100" stroke="#86c868" stroke-width="1.200" fill="none" opacity="0.900"/>
<path d="M790.0 636.0C797.6 635.1 794.6 640.1 797.0 643.0C799.4 645.9 804.3 653.4 808.0 657.5C811.7 661.6 819.9 669.3 825.0 674.0C830.1 678.7 839.9 687.7 846.0 693.0C852.1 698.3 867.8 708.8 871.0 714.0C874.2 719.2 871.7 727.9 870.0 732.0C868.3 736.1 862.6 741.9 858.0 745.0C853.4 748.1 841.2 755.7 835.4 755.4C829.6 755.1 820.1 746.7 814.6 743.0C809.1 739.3 799.5 732.2 794.0 728.0C788.5 723.8 778.6 716.4 773.0 711.7C767.4 707.0 757.3 698.8 752.0 693.0C746.7 687.2 734.6 673.7 733.0 668.0C731.4 662.3 732.4 654.3 740.0 650.0C747.6 645.7 782.4 636.9 790.0 636.0Z" fill="url(#gThighB)" />
<path d="M871.0 714.0C873.3 712.7 882.6 719.7 887.5 722.0C892.4 724.3 902.5 728.7 908.0 731.5C913.5 734.3 923.4 739.5 929.0 743.0C934.6 746.5 944.4 752.8 950.0 757.5C955.6 762.2 965.4 772.5 971.0 778.0C976.6 783.5 986.5 793.4 991.7 799.0C996.9 804.6 1006.6 815.6 1010.0 820.0C1013.4 824.4 1015.9 828.5 1017.0 832.0C1018.1 835.5 1018.7 842.7 1018.0 846.0C1017.3 849.3 1014.2 855.1 1012.0 857.0C1009.8 858.9 1004.6 861.4 1001.7 860.0C998.8 858.6 994.2 851.0 990.0 846.7C985.8 842.4 976.0 832.9 970.0 828.0C964.0 823.1 951.8 814.1 945.0 810.0C938.2 805.9 925.3 800.7 919.0 797.0C912.7 793.3 903.6 786.1 898.0 782.5C892.4 778.9 882.6 772.5 877.0 770.0C871.4 767.5 861.5 765.6 856.0 763.7C850.5 761.8 835.1 757.9 835.4 755.4C835.7 752.9 853.4 748.1 858.0 745.0C862.6 741.9 868.3 736.1 870.0 732.0C871.7 727.9 868.7 715.3 871.0 714.0Z" fill="url(#gSockB)" />
<path d="M905.0 730.5L914.6 735.6L898.0 779.0L888.5 774.0Z" fill="#fbfbf8" />
<path d="M924.0 741.0L933.0 746.0L914.6 788.7L905.0 783.0Z" fill="#fbfbf8" />
<clipPath id="cSB"><path d="M1010.0 820.0C1011.6 818.7 1023.1 819.9 1028.0 820.0C1032.9 820.1 1042.8 821.1 1046.7 820.8C1050.6 820.5 1055.4 816.3 1057.5 817.5C1059.6 818.7 1061.9 825.0 1062.5 830.0C1063.1 835.0 1062.3 848.3 1061.7 855.0C1061.1 861.7 1059.3 872.7 1058.0 880.0C1056.7 887.3 1053.7 903.3 1051.7 910.0C1049.7 916.7 1045.0 925.3 1043.0 930.0C1041.0 934.7 1038.4 943.1 1036.7 945.0C1035.0 946.9 1031.6 946.0 1030.0 944.0C1028.4 942.0 1025.9 934.5 1025.0 930.0C1024.1 925.5 1023.9 915.6 1023.0 910.0C1022.1 904.4 1019.7 893.3 1018.0 888.0C1016.3 882.7 1012.0 873.5 1010.0 870.0C1008.0 866.5 1002.6 863.6 1003.0 861.7C1003.4 859.8 1011.0 858.2 1013.0 856.0C1015.0 853.8 1017.6 848.5 1018.0 845.0C1018.4 841.5 1017.1 833.3 1016.0 830.0C1014.9 826.7 1008.4 821.3 1010.0 820.0Z"/></clipPath>
<path d="M1010.0 820.0C1011.6 818.7 1023.1 819.9 1028.0 820.0C1032.9 820.1 1042.8 821.1 1046.7 820.8C1050.6 820.5 1055.4 816.3 1057.5 817.5C1059.6 818.7 1061.9 825.0 1062.5 830.0C1063.1 835.0 1062.3 848.3 1061.7 855.0C1061.1 861.7 1059.3 872.7 1058.0 880.0C1056.7 887.3 1053.7 903.3 1051.7 910.0C1049.7 916.7 1045.0 925.3 1043.0 930.0C1041.0 934.7 1038.4 943.1 1036.7 945.0C1035.0 946.9 1031.6 946.0 1030.0 944.0C1028.4 942.0 1025.9 934.5 1025.0 930.0C1024.1 925.5 1023.9 915.6 1023.0 910.0C1022.1 904.4 1019.7 893.3 1018.0 888.0C1016.3 882.7 1012.0 873.5 1010.0 870.0C1008.0 866.5 1002.6 863.6 1003.0 861.7C1003.4 859.8 1011.0 858.2 1013.0 856.0C1015.0 853.8 1017.6 848.5 1018.0 845.0C1018.4 841.5 1017.1 833.3 1016.0 830.0C1014.9 826.7 1008.4 821.3 1010.0 820.0Z" fill="#ffffff" stroke="#e4e4e4" stroke-width="0.800"/>
<g clip-path="url(#cSB)">
<path d="M1016.0 862.0C1017.0 856.2 1026.0 850.0 1030.0 850.0C1034.0 850.0 1038.0 855.3 1040.0 862.0C1042.0 868.7 1043.0 883.7 1042.0 890.0C1041.0 896.3 1037.0 900.8 1034.0 900.0C1031.0 899.2 1027.0 891.3 1024.0 885.0C1021.0 878.7 1015.0 867.8 1016.0 862.0Z" fill="#f3f3f3" opacity="0.900" filter="url(#b1)"/>
<path d="M1024.0 905.0C1025.0 898.3 1032.7 898.3 1036.0 900.0C1039.3 901.7 1043.7 908.3 1044.0 915.0C1044.3 921.7 1040.3 935.8 1038.0 940.0C1035.7 944.2 1032.3 945.8 1030.0 940.0C1027.7 934.2 1023.0 911.7 1024.0 905.0Z" fill="#f5f5f5" opacity="0.900" filter="url(#b1)"/>
<path d="M1020.0 825.0C1023.3 822.7 1035.0 823.2 1040.0 824.0C1045.0 824.8 1049.0 826.5 1050.0 830.0C1051.0 833.5 1049.3 842.3 1046.0 845.0C1042.7 847.7 1034.3 847.2 1030.0 846.0C1025.7 844.8 1021.7 841.5 1020.0 838.0C1018.3 834.5 1016.7 827.3 1020.0 825.0Z" fill="#f6f6f6" opacity="0.900" filter="url(#b1)"/>
<path d="M1057.500 818C1063 832 1062 858 1058 880C1053 908 1045 930 1036.700 945" stroke="#a8a8a8" stroke-width="1.400" fill="none" opacity="0.900"/>
<path d="M1052 822C1057 836 1056 860 1052 882C1047 908 1040 928 1033 942" stroke="#e0e0e0" stroke-width="1" fill="none"/>
</g>
<ellipse cx="1054" cy="880" rx="2.500" ry="9" fill="#b9c592" opacity="0.900" transform="rotate(8 1054 880)"/>
<path d="M1022 868L1032 895M1026 865L1037 893M1030 862L1042 890M1030 862L1040 858L1046 870" stroke="#d8d8d8" stroke-width="0.800" fill="none"/>
<path d="M1004.0 832.0C1004.7 826.3 1009.7 822.0 1012.0 822.0C1014.3 822.0 1017.3 827.7 1018.0 832.0C1018.7 836.3 1017.7 844.0 1016.0 848.0C1014.3 852.0 1010.0 858.7 1008.0 856.0C1006.0 853.3 1003.3 837.7 1004.0 832.0Z" fill="#d9f0c0" opacity="0.800"/>
<path d="M649.2 540.0C650.2 537.1 660.0 532.3 663.3 530.8C666.6 529.3 684.1 523.5 688.3 522.5C692.5 521.5 710.2 518.8 713.3 518.3C716.4 517.8 723.8 516.0 725.0 516.7C726.2 517.4 727.3 525.1 728.3 526.7C729.3 528.3 734.9 534.4 736.7 535.8C738.5 537.2 747.8 541.8 750.0 543.3C752.2 544.8 761.2 551.3 763.3 553.3C765.4 555.2 773.3 564.2 775.0 566.7C776.7 569.2 782.2 580.2 783.3 583.3C784.4 586.3 787.5 599.8 788.3 603.3C789.1 606.8 792.6 621.8 793.3 625.0C794.0 628.2 797.0 639.6 796.7 641.7C796.4 643.8 792.1 648.6 790.0 650.0C787.9 651.4 775.3 657.0 771.7 658.3C768.1 659.5 750.2 664.2 746.7 665.0C743.2 665.8 731.7 667.5 730.0 667.5C728.3 667.5 727.5 665.6 726.7 665.0C725.9 664.4 721.2 661.2 720.0 660.0C718.8 658.8 714.2 653.1 711.7 650.8C709.2 648.5 693.9 635.7 690.0 632.0C686.1 628.3 667.7 608.8 665.0 606.5C662.3 604.2 657.8 605.7 657.5 604.2C657.2 602.7 662.6 589.4 661.7 588.3C660.8 587.2 648.3 591.6 646.7 590.8C645.1 590.0 642.1 580.4 642.5 578.3C642.9 576.1 651.1 568.2 651.7 565.0C652.3 561.8 648.2 542.9 649.2 540.0Z" fill="#0a0a0a" />
<path d="M742 548C760 570 772 600 770 640M700 530C720 534 740 540 752 548" stroke="#2a2a2a" stroke-width="1.500" fill="none" opacity="0.800" filter="url(#b1)"/>
<path d="M657.5 604.2L678.3 570.0L688.3 563.3L708.3 553.3L723.3 549.2L724.5 552.5L713.3 557.5L693.3 570.8L685.0 572.5L665.8 606.7Z" fill="#f3f3f3" />
<path d="M722 550.500C732 546 742 542.500 750 542" stroke="#f4f4f4" stroke-width="2.400" fill="none"/>
<path d="M659.500 597.500L668 600" stroke="#b0b0b0" stroke-width="0.800" fill="none"/>
<path d="M725.500 666L729 669L734 667.800" stroke="#f4f4f4" stroke-width="2" fill="none"/>
<path d="M661.7 588.3L666.0 593.0L663.0 600.0L657.5 604.2Z" fill="#e8c4b2" />
<clipPath id="cTF"><path d="M644.0 579.0C638.4 581.2 615.3 590.5 607.0 593.0C598.7 595.5 580.8 597.8 573.0 600.0C565.2 602.2 547.9 609.2 540.0 612.0C532.1 614.8 508.1 621.1 505.0 624.0C501.9 626.9 510.4 633.4 513.0 637.0C515.6 640.6 523.6 650.9 527.0 655.0C530.4 659.1 536.6 670.8 542.0 672.0C547.4 673.2 565.4 666.4 573.0 665.0C580.6 663.6 597.2 661.3 607.0 660.0C616.8 658.7 647.3 655.0 657.0 654.0C666.7 653.0 683.6 651.4 690.0 651.0C696.4 650.6 707.7 650.8 712.0 650.5C716.3 650.2 726.3 650.2 727.0 648.5C727.7 646.8 721.1 640.5 718.0 636.0C714.9 631.5 705.0 616.0 700.0 610.0C695.0 604.0 680.2 589.2 675.0 585.0C669.8 580.8 658.6 574.7 655.0 574.0C651.4 573.3 649.6 576.8 644.0 579.0Z"/></clipPath>
<path d="M644.0 579.0C638.4 581.2 615.3 590.5 607.0 593.0C598.7 595.5 580.8 597.8 573.0 600.0C565.2 602.2 547.9 609.2 540.0 612.0C532.1 614.8 508.1 621.1 505.0 624.0C501.9 626.9 510.4 633.4 513.0 637.0C515.6 640.6 523.6 650.9 527.0 655.0C530.4 659.1 536.6 670.8 542.0 672.0C547.4 673.2 565.4 666.4 573.0 665.0C580.6 663.6 597.2 661.3 607.0 660.0C616.8 658.7 647.3 655.0 657.0 654.0C666.7 653.0 683.6 651.4 690.0 651.0C696.4 650.6 707.7 650.8 712.0 650.5C716.3 650.2 726.3 650.2 727.0 648.5C727.7 646.8 721.1 640.5 718.0 636.0C714.9 631.5 705.0 616.0 700.0 610.0C695.0 604.0 680.2 589.2 675.0 585.0C669.8 580.8 658.6 574.7 655.0 574.0C651.4 573.3 649.6 576.8 644.0 579.0Z" fill="url(#gThigh)" />
<g clip-path="url(#cTF)">
<path d="M524 620C556 605 590 596 622 590" stroke="#ffffff" stroke-width="7" fill="none" opacity="0.800" filter="url(#b2)" stroke-linecap="round"/>
<path d="M528 612C552 602 580 596 600 593.500" stroke="#ffffff" stroke-width="3" fill="none" opacity="0.950" filter="url(#b1)" stroke-linecap="round"/>
<path d="M506 626C512 638 524 654 541 671" stroke="#8fc458" stroke-width="1.500" fill="none" opacity="0.700"/>
<path d="M545 670C600 662 660 656 712 652" stroke="#cf9f8a" stroke-width="5" fill="none" opacity="0.450" filter="url(#b2)"/>
<path d="M640.0 600.0C642.0 595.7 652.0 598.0 662.0 604.0C672.0 610.0 691.7 628.0 700.0 636.0C708.3 644.0 715.3 649.3 712.0 652.0C708.7 654.7 690.3 655.7 680.0 652.0C669.7 648.3 656.7 638.7 650.0 630.0C643.3 621.3 638.0 604.3 640.0 600.0Z" fill="#d8ae9c" opacity="0.300" filter="url(#b2)"/>
</g>
<path d="M649.2 540.0L651.7 565.0L642.5 578.3L646.7 590.8L661.7 588.3L657.5 604.2L665.8 606.7L681.0 616.0L696.7 626.7L712.0 637.0L727.5 648.0L745.0 640.0L720.0 580.0L680.0 545.0Z" fill="#0a0a0a" />
<path d="M657.5 604.2L678.3 570.0L688.3 563.3L708.3 553.3L723.3 549.2L724.5 552.5L713.3 557.5L693.3 570.8L685.0 572.5L665.8 606.7Z" fill="#f3f3f3" />
<path d="M661.7 588.0L668.5 586.5L659.5 602.0Z" fill="#e8c4b2" />
<path d="M505.0 624.0C502.3 623.5 492.7 630.5 490.0 633.0C487.3 635.5 483.2 642.2 482.0 645.0C480.8 647.8 479.9 653.7 480.0 657.0C480.1 660.3 481.7 669.1 482.5 673.0C483.3 676.9 485.9 684.9 487.0 690.0C488.1 695.1 490.7 711.2 492.0 717.0C493.3 722.8 496.5 733.8 498.0 740.0C499.5 746.2 503.8 764.4 505.0 770.0C506.2 775.6 507.4 782.7 508.5 788.0C509.6 793.3 513.0 809.1 514.0 815.5C515.0 821.9 516.8 837.2 517.0 843.0C517.2 848.8 513.8 862.1 516.0 865.5C518.2 868.9 531.9 871.6 536.0 872.0C540.1 872.4 549.0 873.2 551.0 869.0C553.0 864.8 553.0 842.2 553.0 836.0C553.0 829.8 551.5 821.1 551.0 815.5C550.5 809.9 549.4 794.5 549.0 788.0C548.6 781.5 547.6 765.6 547.4 760.0C547.2 754.4 547.2 744.3 547.0 740.0C546.8 735.7 546.5 726.5 546.0 723.0C545.5 719.5 543.7 713.9 543.0 710.0C542.3 706.1 540.6 693.9 540.0 690.0C539.4 686.1 537.8 679.1 538.0 677.0C538.2 674.9 543.3 674.6 542.0 672.0C540.7 669.4 530.4 659.1 527.0 655.0C523.6 650.9 515.6 640.6 513.0 637.0C510.4 633.4 507.7 624.5 505.0 624.0Z" fill="url(#gSockF)" />
<path d="M492.0 640.0C493.7 633.3 501.2 630.3 505.0 632.0C508.8 633.7 514.2 643.7 515.0 650.0C515.8 656.3 513.3 666.3 510.0 670.0C506.7 673.7 498.0 677.0 495.0 672.0C492.0 667.0 490.3 646.7 492.0 640.0Z" fill="#cdf294" opacity="0.700" filter="url(#b2)"/>
<path d="M485.0 685.0L539.0 682.5L541.0 692.5L487.5 696.7Z" fill="#fbfbf8" />
<path d="M490.0 709.0L543.0 704.0L545.0 715.0L493.0 721.7Z" fill="#fbfbf8" />
<path d="M543.0 842.0C544.3 836.7 549.8 834.7 552.0 836.0C554.2 837.3 556.0 845.0 556.0 850.0C556.0 855.0 554.0 863.0 552.0 866.0C550.0 869.0 545.5 872.0 544.0 868.0C542.5 864.0 541.7 847.3 543.0 842.0Z" fill="#dcebc4" opacity="0.900"/>
<clipPath id="cSF"><path d="M514.0 867.0C510.1 867.9 504.5 875.7 501.0 878.5C497.5 881.3 491.2 883.5 488.0 888.0C484.8 892.5 479.7 905.9 477.0 912.0C474.3 918.1 470.3 929.1 468.0 934.0C465.7 938.9 460.5 946.1 460.0 949.0C459.5 951.9 460.5 954.9 464.0 956.0C467.5 957.1 479.3 958.5 486.0 957.0C492.7 955.5 506.3 949.0 514.0 945.0C521.7 941.0 536.5 932.2 544.0 927.0C551.5 921.8 564.1 910.7 570.0 906.0C575.9 901.3 585.3 894.4 588.0 891.5C590.7 888.6 590.9 887.0 590.0 884.0C589.1 881.0 583.7 873.2 581.0 869.0C578.3 864.8 572.5 855.3 570.0 852.6C567.5 849.9 563.5 847.5 562.0 849.0C560.5 850.5 560.9 860.8 558.5 864.0C556.1 867.2 547.8 871.9 544.0 873.0C540.2 874.1 534.0 872.8 530.0 872.0C526.0 871.2 517.9 866.1 514.0 867.0Z"/></clipPath>
<path d="M514.0 867.0C510.1 867.9 504.5 875.7 501.0 878.5C497.5 881.3 491.2 883.5 488.0 888.0C484.8 892.5 479.7 905.9 477.0 912.0C474.3 918.1 470.3 929.1 468.0 934.0C465.7 938.9 460.5 946.1 460.0 949.0C459.5 951.9 460.5 954.9 464.0 956.0C467.5 957.1 479.3 958.5 486.0 957.0C492.7 955.5 506.3 949.0 514.0 945.0C521.7 941.0 536.5 932.2 544.0 927.0C551.5 921.8 564.1 910.7 570.0 906.0C575.9 901.3 585.3 894.4 588.0 891.5C590.7 888.6 590.9 887.0 590.0 884.0C589.1 881.0 583.7 873.2 581.0 869.0C578.3 864.8 572.5 855.3 570.0 852.6C567.5 849.9 563.5 847.5 562.0 849.0C560.5 850.5 560.9 860.8 558.5 864.0C556.1 867.2 547.8 871.9 544.0 873.0C540.2 874.1 534.0 872.8 530.0 872.0C526.0 871.2 517.9 866.1 514.0 867.0Z" fill="#ffffff" stroke="#e0e0e0" stroke-width="0.800"/>
<g clip-path="url(#cSF)">
<path d="M470.0 932.0C471.3 925.3 479.0 914.5 484.0 910.0C489.0 905.5 495.3 902.5 500.0 905.0C504.7 907.5 512.7 919.2 512.0 925.0C511.3 930.8 502.0 935.8 496.0 940.0C490.0 944.2 480.3 951.3 476.0 950.0C471.7 948.7 468.7 938.7 470.0 932.0Z" fill="#f2f2f2" opacity="0.900" filter="url(#b1)"/>
<path d="M490.0 892.0C491.3 887.8 501.7 881.3 506.0 880.0C510.3 878.7 513.3 879.8 516.0 884.0C518.7 888.2 522.7 899.8 522.0 905.0C521.3 910.2 516.0 915.0 512.0 915.0C508.0 915.0 501.7 908.8 498.0 905.0C494.3 901.2 488.7 896.2 490.0 892.0Z" fill="#eeeeee" opacity="0.900" filter="url(#b1)"/>
<path d="M520.0 925.0C523.3 919.2 535.8 912.5 545.0 905.0C554.2 897.5 567.5 883.5 575.0 880.0C582.5 876.5 592.5 878.2 590.0 884.0C587.5 889.8 570.8 905.7 560.0 915.0C549.2 924.3 531.7 938.3 525.0 940.0C518.3 941.7 516.7 930.8 520.0 925.0Z" fill="#f7f7f7" opacity="0.900"/>
<path d="M590 885C580 900 560 916 540 930C520 943 500 953 486 957" stroke="#a8a8a8" stroke-width="1.200" fill="none" opacity="0.900"/>
<path d="M584 880C574 894 556 908 536 921C516 934 498 944 480 950" stroke="#dcdcdc" stroke-width="1" fill="none" opacity="0.900"/>
</g>
<path d="M490 890L508 882M486 900L510 893M484 910L512 905M492 884L500 896M498 880L505 893" stroke="#cfcfcf" stroke-width="1" fill="none"/>
<path d="M511 878C514 890 517 900 519 905" stroke="#bcbcbc" stroke-width="2.500" fill="none" opacity="0.800"/>
<path d="M508 905C512 915 516 925 520 930M508 905C514 912 522 915 526 912" stroke="#8c8c8c" stroke-width="0.800" fill="none" opacity="0.800"/>
<path d="M514 867C528 873 544 874 558 864" stroke="#dadada" stroke-width="1.500" fill="none"/>
</g>
<path d="M733.9 215.5L1149.5 215.5L1149.5 902.5L1077.5 902.5L1077.5 895.0L1081.0 878.0L1082.5 860.0L1084.0 843.0L1084.0 818.0L1081.0 811.7L1069.0 800.0L1053.0 799.0L1045.0 801.0L1023.0 801.0L1013.0 793.0L1001.7 780.0L969.8 752.0L942.6 727.0L924.5 716.0L900.0 705.0L879.0 691.0L842.8 661.5L815.6 625.0L806.5 598.0L802.5 580.0L796.0 562.5L780.0 542.5L760.0 524.0L746.0 512.5L744.0 500.0L745.5 479.0L752.5 467.5L760.0 456.0L761.0 445.0L764.0 434.5L782.5 441.0L807.5 450.0L835.0 465.0L860.0 485.0L890.0 507.5L900.0 520.0L906.0 525.0L913.0 535.0L920.4 547.4L931.6 561.7L940.7 570.8L943.8 573.4L969.3 573.9L974.4 578.0L998.8 578.0L1005.9 572.0L1010.5 566.8L1010.5 558.6L1014.6 553.5L1015.0 535.0L1012.0 521.0L1002.0 510.7L991.7 500.6L981.5 491.4L971.3 484.8L961.0 480.2L951.0 471.0L937.5 457.5L912.5 432.5L890.0 410.0L872.5 392.5L850.0 381.0L830.0 374.0L805.0 364.0L785.0 354.0L781.0 345.0L786.0 330.0L786.0 276.0L774.7 260.0L758.9 251.0L749.8 230.7Z" fill="none" stroke="#ffffff" stroke-width="1" shape-rendering="crispEdges"/>
<path d="M733.9 215.5L1149.5 215.5L1149.5 902.5L1077.5 902.5L1077.5 895.0L1081.0 878.0L1082.5 860.0L1084.0 843.0L1084.0 818.0L1081.0 811.7L1069.0 800.0L1053.0 799.0L1045.0 801.0L1023.0 801.0L1013.0 793.0L1001.7 780.0L969.8 752.0L942.6 727.0L924.5 716.0L900.0 705.0L879.0 691.0L842.8 661.5L815.6 625.0L806.5 598.0L802.5 580.0L796.0 562.5L780.0 542.5L760.0 524.0L746.0 512.5L744.0 500.0L745.5 479.0L752.5 467.5L760.0 456.0L761.0 445.0L764.0 434.5L782.5 441.0L807.5 450.0L835.0 465.0L860.0 485.0L890.0 507.5L900.0 520.0L906.0 525.0L913.0 535.0L920.4 547.4L931.6 561.7L940.7 570.8L943.8 573.4L969.3 573.9L974.4 578.0L998.8 578.0L1005.9 572.0L1010.5 566.8L1010.5 558.6L1014.6 553.5L1015.0 535.0L1012.0 521.0L1002.0 510.7L991.7 500.6L981.5 491.4L971.3 484.8L961.0 480.2L951.0 471.0L937.5 457.5L912.5 432.5L890.0 410.0L872.5 392.5L850.0 381.0L830.0 374.0L805.0 364.0L785.0 354.0L781.0 345.0L786.0 330.0L786.0 276.0L774.7 260.0L758.9 251.0L749.8 230.7Z" fill="none" stroke="#000000" stroke-width="1" stroke-dasharray="4 4" shape-rendering="crispEdges"/>
<path d="M711.5 686.4L711.5 902.5L1000.0 902.5L998.0 900.0L995.0 893.0L990.0 880.0L975.0 863.0L958.0 846.7L936.7 831.7L920.0 821.0L892.7 802.0L870.0 790.8L833.7 784.0L811.0 770.4L779.3 743.0L743.0 711.4L715.8 686.4Z" fill="none" stroke="#ffffff" stroke-width="1" shape-rendering="crispEdges"/>
<path d="M711.5 686.4L711.5 902.5L1000.0 902.5L998.0 900.0L995.0 893.0L990.0 880.0L975.0 863.0L958.0 846.7L936.7 831.7L920.0 821.0L892.7 802.0L870.0 790.8L833.7 784.0L811.0 770.4L779.3 743.0L743.0 711.4L715.8 686.4Z" fill="none" stroke="#000000" stroke-width="1" stroke-dasharray="4 4" shape-rendering="crispEdges"/>
</svg>
<svg style="left:0;top:0" width="1920" height="1080" viewBox="0 0 1920 1080"><path d="M1058.300 96.800L901 208M920.500 164L899.500 209L947.500 204.800" fill="none" stroke="#fb0505" stroke-width="3.800" stroke-linecap="round" stroke-linejoin="miter"/></svg>
<!--FIG-END-->
<!--CANVAS-->

<!-- ===== LEFT TOOLBAR ===== -->
<div class="a" style="left:0;top:60px;width:39px;height:12px;background:#424242"></div>
<div class="a" style="left:0;top:72px;width:39px;height:1006px;background:#535353"></div>
<div class="a" style="left:39px;top:60px;width:2px;height:1018px;background:#3c3c3c"></div>
<svg style="left:6px;top:63px" width="8" height="6" viewBox="0 0 8 6"><path d="M0.500 0.500L3 3 0.500 5.500M4.500 0.500L7 3 4.500 5.500" fill="none" stroke="#dcdcdc" stroke-width="1.200"/></svg>
<div class="grip" style="left:10px;top:75px;width:19px"></div>
<div class="a" style="left:4px;top:115px;width:31px;height:25px;background:#383838;border-radius:3px"></div>
<svg style="left:10px;top:91px" width="20" height="20" viewBox="0 0 20 20"><path d="M2.500 10.300H17M9.700 3.500V17.200" stroke="#dcdcdc" stroke-width="1.300" fill="none"/><path d="M9.700 1.800L12 5H7.400zM9.700 18.800L12 15.600H7.400zM1.300 10.300L4.500 8v4.600zM18.200 10.300L15 8v4.600z" fill="#dcdcdc"/></svg>
<svg style="left:29px;top:107px" width="3" height="3" viewBox="0 0 3 3"><path d="M3 0v3H0z" fill="#b0b0b0"/></svg>
<svg style="left:10px;top:117px" width="20" height="20" viewBox="0 0 20 20"><rect x="2.700" y="3.300" width="14.800" height="11.800" fill="none" stroke="#dcdcdc" stroke-width="1.500" stroke-dasharray="3.400 2.100"/></svg>
<svg style="left:29px;top:133px" width="3" height="3" viewBox="0 0 3 3"><path d="M3 0v3H0z" fill="#b0b0b0"/></svg>
<svg style="left:10px;top:143px" width="20" height="20" viewBox="0 0 20 20"><path d="M1.600 4.200L7.600 7L4.800 8.600L8.200 13.200M2 16.600L7.600 14.200M6.600 18.700L9.300 14.800L17 10.600" fill="none" stroke="#dcdcdc" stroke-width="1.100"/><circle cx="8.500" cy="13.900" r="1.400" fill="#535353" stroke="#dcdcdc" stroke-width="0.900"/><path d="M9.500 2h3.500a4 4 0 0 1 0 8h-3.500v-2.700h3.300a1.300 1.300 0 0 0 0-2.600h-3.300z" fill="#dcdcdc"/><path d="M10.300 3.300h1.300M10.300 8.700h1.300" stroke="#535353" stroke-width="1"/></svg>
<svg style="left:29px;top:159px" width="3" height="3" viewBox="0 0 3 3"><path d="M3 0v3H0z" fill="#b0b0b0"/></svg>
<svg style="left:10px;top:169px" width="20" height="20" viewBox="0 0 20 20"><rect x="3.400" y="2.600" width="12" height="12" fill="none" stroke="#dcdcdc" stroke-width="1.300" stroke-dasharray="1.300 1.370"/><path d="M5.900 5.300h7v4.500h-2.200v2H5.900z" fill="#dcdcdc"/><path d="M12 9.800v9l2.300-2.200 4.200-1.100z" fill="#dcdcdc" stroke="#535353" stroke-width="0.700"/></svg>
<svg style="left:29px;top:185px" width="3" height="3" viewBox="0 0 3 3"><path d="M3 0v3H0z" fill="#b0b0b0"/></svg>
<svg style="left:10px;top:195px" width="20" height="20" viewBox="0 0 20 20"><path d="M5 1V13H11.700M7.400 5H14.400V17.300M0.100 5H3M16.400 14H18.900" fill="none" stroke="#dcdcdc" stroke-width="2"/></svg>
<svg style="left:29px;top:211px" width="3" height="3" viewBox="0 0 3 3"><path d="M3 0v3H0z" fill="#b0b0b0"/></svg>
<svg style="left:10px;top:221px" width="20" height="20" viewBox="0 0 20 20"><rect x="2.750" y="3.750" width="14.500" height="12.500" fill="none" stroke="#dcdcdc" stroke-width="1.500"/><path d="M2.750 3.750l14.500 12.500M17.250 3.750l-14.500 12.500" stroke="#dcdcdc" stroke-width="1.100"/></svg>
<svg style="left:10px;top:247px" width="20" height="20" viewBox="0 0 20 20"><path d="M13.200 2.200a2.600 2.600 0 0 1 4.400 3.600l-2.300 2.300 0.900 0.900-1.500 1.500-5.200-5.200 1.500-1.500 0.900 0.900z" fill="#dcdcdc"/><path d="M10.500 7.500L3.500 14.500l-1 3 3-1 7-7" fill="none" stroke="#dcdcdc" stroke-width="1.300"/></svg>
<svg style="left:29px;top:263px" width="3" height="3" viewBox="0 0 3 3"><path d="M3 0v3H0z" fill="#b0b0b0"/></svg>
<svg style="left:10px;top:273px" width="20" height="20" viewBox="0 0 20 20"><g transform="rotate(-45 11 11)"><rect x="3" y="7" width="16" height="8" rx="2.500" fill="#dcdcdc"/><rect x="8.500" y="8.500" width="5" height="5" fill="#535353"/><circle cx="10" cy="10" r="0.700" fill="#dcdcdc"/><circle cx="12" cy="10" r="0.700" fill="#dcdcdc"/><circle cx="10" cy="12" r="0.700" fill="#dcdcdc"/><circle cx="12" cy="12" r="0.700" fill="#dcdcdc"/></g><path d="M2 9a5 5 0 0 1 6.500-6" fill="none" stroke="#dcdcdc" stroke-width="1" stroke-dasharray="1 1.300"/></svg>
<svg style="left:29px;top:289px" width="3" height="3" viewBox="0 0 3 3"><path d="M3 0v3H0z" fill="#b0b0b0"/></svg>
<svg style="left:10px;top:299px" width="20" height="20" viewBox="0 0 20 20"><path d="M14 2.500l3.500 3.500L7 16.500l-4.800 1.300L3.500 13z M12 4.500l3.500 3.500" fill="none" stroke="#dcdcdc" stroke-width="1.400" stroke-linejoin="round"/><path d="M2.200 17.800l1-3.300 2.300 2.300z" fill="#dcdcdc"/></svg>
<svg style="left:29px;top:315px" width="3" height="3" viewBox="0 0 3 3"><path d="M3 0v3H0z" fill="#b0b0b0"/></svg>
<svg style="left:10px;top:325px" width="20" height="20" viewBox="0 0 20 20"><path d="M7.500 4.500a2.500 2.500 0 1 1 5 0c0 1.500-0.900 2.200-0.900 3.700V10H16v3.500H4V10h4.400V8.200c0-1.500-0.900-2.200-0.900-3.700z" fill="#dcdcdc"/><rect x="4" y="15" width="12" height="1.600" fill="#dcdcdc"/></svg>
<svg style="left:29px;top:341px" width="3" height="3" viewBox="0 0 3 3"><path d="M3 0v3H0z" fill="#b0b0b0"/></svg>
<svg style="left:10px;top:351px" width="20" height="20" viewBox="0 0 20 20"><path d="M17.500 2.500c-3 1.500-6 5-7.500 8l2 1.500c2-2.500 4.500-6 5.500-9.500z" fill="#dcdcdc"/><path d="M9.300 11.300c-2 0.200-2.300 2.700-4.300 3.500 2.500 1 5.500 0 6.100-2.200z" fill="#dcdcdc"/><path d="M3 9a5 5 0 0 1 5.500-5" fill="none" stroke="#dcdcdc" stroke-width="1.300"/><path d="M1 7.500l2 3 2.500-2.500z" fill="#dcdcdc"/><path d="M13 14a5 5 0 0 1-3 3" fill="none" stroke="#dcdcdc" stroke-width="1" stroke-dasharray="1 1.300"/></svg>
<svg style="left:29px;top:367px" width="3" height="3" viewBox="0 0 3 3"><path d="M3 0v3H0z" fill="#b0b0b0"/></svg>
<svg style="left:10px;top:377px" width="20" height="20" viewBox="0 0 20 20"><path d="M11.500 3l6 5-7 8H6L3 13.500z" fill="none" stroke="#dcdcdc" stroke-width="1.400" stroke-linejoin="round"/><path d="M11.500 3l6 5-3.800 4.400-6-5z" fill="#dcdcdc"/><path d="M5 17.500h12.500" stroke="#dcdcdc" stroke-width="1.300"/></svg>
<svg style="left:29px;top:393px" width="3" height="3" viewBox="0 0 3 3"><path d="M3 0v3H0z" fill="#b0b0b0"/></svg>
<svg style="left:10px;top:403px" width="20" height="20" viewBox="0 0 20 20"><defs><linearGradient id="tg" x1="0" x2="1"><stop offset="0" stop-color="#e6e6e6"/><stop offset="1" stop-color="#3c3c3c"/></linearGradient></defs><rect x="2.600" y="4.600" width="14.800" height="10.800" fill="url(#tg)" stroke="#dcdcdc" stroke-width="1.200"/></svg>
<svg style="left:29px;top:419px" width="3" height="3" viewBox="0 0 3 3"><path d="M3 0v3H0z" fill="#b0b0b0"/></svg>
<svg style="left:10px;top:429px" width="20" height="20" viewBox="0 0 20 20"><path d="M10 2.500C8.500 6 5.200 9 5.200 12.300a4.800 4.800 0 0 0 9.600 0C14.800 9 11.500 6 10 2.500z" fill="#dcdcdc"/></svg>
<svg style="left:29px;top:445px" width="3" height="3" viewBox="0 0 3 3"><path d="M3 0v3H0z" fill="#b0b0b0"/></svg>
<svg style="left:10px;top:455px" width="20" height="20" viewBox="0 0 20 20"><circle cx="12.500" cy="7" r="4.600" fill="#dcdcdc"/><path d="M9 10.500L3 16.500" stroke="#dcdcdc" stroke-width="2"/></svg>
<svg style="left:29px;top:471px" width="3" height="3" viewBox="0 0 3 3"><path d="M3 0v3H0z" fill="#b0b0b0"/></svg>
<svg style="left:10px;top:481px" width="20" height="20" viewBox="0 0 20 20"><path d="M11.500 2.500l5.500 5-2 1.500c0 3-2 5.500-5 6.500l-6.500 2 2.500-6.500c1-3 3-5 6-5.500z" fill="none" stroke="#dcdcdc" stroke-width="1.400" stroke-linejoin="round"/><path d="M3.500 17.500l5.500-6" stroke="#dcdcdc" stroke-width="1.100"/><circle cx="9.700" cy="10.700" r="1.300" fill="#dcdcdc"/></svg>
<svg style="left:29px;top:497px" width="3" height="3" viewBox="0 0 3 3"><path d="M3 0v3H0z" fill="#b0b0b0"/></svg>
<svg style="left:10px;top:507px" width="20" height="20" viewBox="0 0 20 20"><path d="M3.500 3h13v3.600h-1.200l-0.500-1.800H11.300v10.600l1.900 0.400v1.200H6.800v-1.200l1.900-0.400V4.800H5.200l-0.500 1.800H3.500z" fill="#dcdcdc"/></svg>
<svg style="left:29px;top:523px" width="3" height="3" viewBox="0 0 3 3"><path d="M3 0v3H0z" fill="#b0b0b0"/></svg>
<svg style="left:10px;top:533px" width="20" height="20" viewBox="0 0 20 20"><path d="M6.500 2.500v14l3.400-3.200 2.200 5 2.300-1-2.200-4.800 4.500-0.300z" fill="#141414" stroke="#e6e6e6" stroke-width="1.100" stroke-linejoin="round"/></svg>
<svg style="left:29px;top:549px" width="3" height="3" viewBox="0 0 3 3"><path d="M3 0v3H0z" fill="#b0b0b0"/></svg>
<svg style="left:10px;top:559px" width="20" height="20" viewBox="0 0 20 20"><rect x="2.600" y="4.600" width="14.800" height="10.800" fill="#8a8a8a" stroke="#dcdcdc" stroke-width="1.200"/></svg>
<svg style="left:29px;top:575px" width="3" height="3" viewBox="0 0 3 3"><path d="M3 0v3H0z" fill="#b0b0b0"/></svg>
<svg style="left:10px;top:585px" width="20" height="20" viewBox="0 0 20 20"><path d="M6.500 10V4.800a1.100 1.100 0 0 1 2.200 0V9h0.600V3.300a1.100 1.100 0 0 1 2.200 0V9h0.600V4.200a1.100 1.100 0 0 1 2.200 0V10h0.600V6.500a1 1 0 0 1 2.100 0v6c0 3.500-2 5.500-5.300 5.500-2.500 0-3.800-1-5-3L3.200 10.500c-0.600-1 0.600-2 1.500-1.200z" fill="#dcdcdc"/></svg>
<svg style="left:29px;top:601px" width="3" height="3" viewBox="0 0 3 3"><path d="M3 0v3H0z" fill="#b0b0b0"/></svg>
<svg style="left:10px;top:611px" width="20" height="20" viewBox="0 0 20 20"><circle cx="8.500" cy="8.500" r="5.600" fill="none" stroke="#dcdcdc" stroke-width="1.500"/><path d="M12.800 12.800L18 18" stroke="#dcdcdc" stroke-width="2.300"/><path d="M5.500 8a3 3 0 0 1 2.700-2.700" fill="none" stroke="#dcdcdc" stroke-width="1"/></svg>
<svg style="left:10px;top:637px" width="20" height="20" viewBox="0 0 20 20"><circle cx="3.500" cy="10" r="1.600" fill="#dcdcdc"/><circle cx="10" cy="10" r="1.600" fill="#dcdcdc"/><circle cx="16.500" cy="10" r="1.600" fill="#dcdcdc"/></svg>
<svg style="left:29px;top:653px" width="3" height="3" viewBox="0 0 3 3"><path d="M3 0v3H0z" fill="#b0b0b0"/></svg>
<div class="a" style="left:9px;top:669px;width:7px;height:7px;background:#f0f0f0;border:1px solid #1a1a1a"></div><div class="a" style="left:5px;top:665px;width:7px;height:7px;background:#0a0a0a;border:1px solid #e6e6e6"></div>
<svg style="left:22px;top:665px" width="11" height="11" viewBox="0 0 11 11"><path d="M2.500 5V2.500H8.500V8" fill="none" stroke="#dcdcdc" stroke-width="1.300"/><path d="M0 4.500l2.500-3 2.500 3zM6 7l2.500 3.500L11 7z" fill="#dcdcdc"/></svg>
<div class="a" style="left:14px;top:691px;width:20px;height:20px;background:#f00a0a;border:1px solid #e6e6e6;box-shadow:0 0 0 1px #3a3a3a"></div>
<div class="a" style="left:4px;top:682px;width:20px;height:20px;background:#e92328;border:1px solid #e6e6e6;box-shadow:0 0 0 1px #3a3a3a"></div>
<svg style="left:11px;top:722px" width="18" height="13" viewBox="0 0 18 13"><rect x="0.600" y="0.600" width="16.800" height="11.800" fill="none" stroke="#dcdcdc" stroke-width="1.200"/><circle cx="9" cy="6.500" r="3.300" fill="none" stroke="#dcdcdc" stroke-width="1" stroke-dasharray="1 1"/></svg>
<svg style="left:11px;top:748px" width="18" height="14" viewBox="0 0 18 14"><rect x="5.600" y="0.600" width="11.800" height="8.800" fill="none" stroke="#dcdcdc" stroke-width="1.200"/><rect x="0.600" y="4.600" width="11.800" height="8.800" fill="#535353" stroke="#dcdcdc" stroke-width="1.200"/></svg>
<svg style="left:29px;top:761px" width="3" height="3" viewBox="0 0 3 3"><path d="M3 0v3H0z" fill="#b0b0b0"/></svg>
<!--TOOLBAR-->

<!-- ===== RIGHT PANELS ===== -->
<div class="a" style="left:1503px;top:89px;width:16px;height:973px;background:#4a4a4a"></div>
<div class="a" style="left:1519px;top:60px;width:3px;height:1018px;background:linear-gradient(90deg,#474747 0 1px,#3b3b3b 1px 2px,#474747 2px 3px)"></div>
<div class="a" style="left:1522px;top:60px;width:398px;height:12px;background:#424242"></div>
<svg style="left:1546px;top:63px" width="8" height="6" viewBox="0 0 8 6"><path d="M3 0.500L0.500 3 3 5.500M7 0.500L4.500 3 7 5.500" fill="none" stroke="#dcdcdc" stroke-width="1.200"/></svg>
<svg style="left:1833px;top:63px" width="8" height="6" viewBox="0 0 8 6"><path d="M0.500 0.500L3 3 0.500 5.500M4.500 0.500L7 3 4.500 5.500" fill="none" stroke="#dcdcdc" stroke-width="1.200"/></svg>
<svg style="left:1905px;top:63px" width="8" height="6" viewBox="0 0 8 6"><path d="M3 0.500L0.500 3 3 5.500M7 0.500L4.500 3 7 5.500" fill="none" stroke="#dcdcdc" stroke-width="1.200"/></svg>
<div class="a" style="left:1522px;top:72px;width:38px;height:1006px;background:#535353"></div>
<div class="a" style="left:1559px;top:72px;width:3px;height:1006px;background:linear-gradient(90deg,#474747 0 1px,#3b3b3b 1px 2px,#474747 2px 3px)"></div>
<div class="a" style="left:1522px;top:112px;width:37px;height:2px;background:linear-gradient(180deg,#3b3b3b 0 1px,#484848 1px 2px)"></div>
<div class="a" style="left:1522px;top:181px;width:37px;height:2px;background:linear-gradient(180deg,#3b3b3b 0 1px,#484848 1px 2px)"></div>
<div class="a" style="left:1522px;top:222px;width:37px;height:2px;background:linear-gradient(180deg,#3b3b3b 0 1px,#484848 1px 2px)"></div>
<div class="a" style="left:1522px;top:263px;width:37px;height:2px;background:linear-gradient(180deg,#3b3b3b 0 1px,#484848 1px 2px)"></div>
<div class="grip" style="left:1531px;top:75px;width:19px"></div>
<div class="grip" style="left:1531px;top:116px;width:19px"></div>
<div class="grip" style="left:1531px;top:185px;width:19px"></div>
<div class="grip" style="left:1531px;top:226px;width:19px"></div>
<svg style="left:1533px;top:86px" width="16" height="17" viewBox="0 0 16 17"><rect x="0.600" y="0.600" width="4.300" height="4.300" fill="none" stroke="#dcdcdc" stroke-width="1.100"/><rect x="0.600" y="6.300" width="4.300" height="4.300" fill="none" stroke="#dcdcdc" stroke-width="1.100"/><rect x="0" y="12" width="5.500" height="5" fill="#dcdcdc"/><path d="M8.500 3.500c5-2.500 8 5 1.500 10.500" fill="none" stroke="#dcdcdc" stroke-width="1.500"/><path d="M7.500 3.200L12.500 0.500v5z" fill="#dcdcdc"/></svg>
<div class="t" style="left:1533px;top:125px;font-size:17px;line-height:20px;height:20px;color:#dcdcdc">A</div><div class="a" style="left:1547px;top:127px;width:1px;height:17px;background:#dcdcdc"></div>
<svg style="left:1534px;top:156px" width="12" height="15" viewBox="0 0 12 15"><path d="M5.500 0H12v1.400h-1.200V15H9.500V1.400H7.800V15H6.500V8A4 4 0 0 1 5.500 0z" fill="#dcdcdc"/></svg>
<div class="t" style="left:1532px;top:193px;font-family:'Liberation Serif',serif;font-style:italic;font-weight:bold;font-size:20px;line-height:22px;height:22px;color:#dcdcdc">A</div>
<svg style="left:1532px;top:236px" width="17" height="18" viewBox="0 0 17 18"><path d="M8.500 1L16 4.800v8.400L8.500 17 1 13.200V4.800zM1 4.800l7.500 3.800L16 4.800M8.500 8.600V17" fill="none" stroke="#dcdcdc" stroke-width="1.300" stroke-linejoin="round"/><path d="M1 4.800l7.500 3.800V17L1 13.200z" fill="#dcdcdc" opacity="0.550"/></svg>
<div class="a" style="left:1562px;top:72px;width:284px;height:28px;background:#424242"></div>
<div class="a" style="left:1562px;top:72px;width:45px;height:28px;background:#535353"></div>
<div class="a" style="left:1562px;top:100px;width:284px;height:305px;background:#535353"></div>
<div class="a" style="left:1607px;top:72px;width:1px;height:27px;background:#3a3a3a"></div>
<div class="a" style="left:1672px;top:72px;width:1px;height:27px;background:#3a3a3a"></div>
<div class="a" style="left:1740px;top:72px;width:1px;height:27px;background:#3a3a3a"></div>
<div class="a" style="left:1801px;top:72px;width:1px;height:27px;background:#3a3a3a"></div>
<div class="a" style="left:1607px;top:99px;width:239px;height:1px;background:#3a3a3a"></div>
<div class="t b" style="left:1570px;top:77px;font-size:11px;color:#f0f0f0;letter-spacing:-0.19px">Color</div>
<div class="t b" style="left:1615px;top:77px;font-size:11px;color:#a0a0a0;letter-spacing:-0.37px">Swatches</div>
<div class="t b" style="left:1681px;top:77px;font-size:11px;color:#a0a0a0;letter-spacing:-0.15px">Gradients</div>
<div class="t b" style="left:1750px;top:77px;font-size:11px;color:#a0a0a0;letter-spacing:-0.19px">Patterns</div>
<svg style="left:1831px;top:82px" width="10" height="8" viewBox="0 0 10 8"><path d="M0 0.500h10M0 2.500h10M0 4.500h10M0 6.500h10" stroke="#c8c8c8" stroke-width="1" shape-rendering="crispEdges"/></svg>
<div class="a" style="left:1581px;top:121px;width:20px;height:19px;background:#f00a0a;border:1px solid #f0f0f0;box-shadow:0 0 0 1px #3a3a3a"></div>
<div class="a" style="left:1570px;top:109px;width:23px;height:22px;border:1px solid #8a8a8a"></div>
<div class="a" style="left:1572px;top:111px;width:19px;height:18px;background:#e92328;border:1px solid #f0f0f0;box-shadow:0 0 0 1px #2a2a2a"></div>
<div class="a" style="left:1607px;top:107px;width:187px;height:277px;background:linear-gradient(to bottom,rgba(0,0,0,0),#000),linear-gradient(to right,#fff,#f00)"></div>
<div class="a" style="left:1756px;top:124px;width:12px;height:12px;border:1px solid #fff;border-radius:50%"></div>
<div class="a" style="left:1811px;top:107px;width:19px;height:277px;background:linear-gradient(to bottom,#f00 0%,#f0f 16.670%,#00f 33.330%,#0ff 50%,#0f0 66.670%,#ff0 83.330%,#f00 100%)"></div>
<svg style="left:1802px;top:379px" width="7" height="9" viewBox="0 0 7 9"><path d="M0.500 0.500h2.500L6.500 4.500 3 8.500H0.500z" fill="#f0f0f0" stroke="#2a2a2a" stroke-width="0.600"/></svg>
<div class="a" style="left:1562px;top:405px;width:284px;height:3px;background:#3a3a3a"></div>
<div class="a" style="left:1846px;top:72px;width:3px;height:1006px;background:linear-gradient(90deg,#474747 0 1px,#3b3b3b 1px 2px,#474747 2px 3px)"></div>
<div class="a" style="left:1849px;top:72px;width:71px;height:1006px;background:#535353"></div>
<div class="a" style="left:1849px;top:112px;width:71px;height:2px;background:linear-gradient(180deg,#3b3b3b 0 1px,#484848 1px 2px)"></div>
<div class="a" style="left:1849px;top:153px;width:71px;height:2px;background:linear-gradient(180deg,#3b3b3b 0 1px,#484848 1px 2px)"></div>
<div class="grip" style="left:1874px;top:75px;width:19px"></div>
<div class="grip" style="left:1874px;top:116px;width:19px"></div>
<svg style="left:1860px;top:85px" width="14" height="19" viewBox="0 0 14 19"><path d="M4.500 13.500C4.500 11 1 10 1 6.500a6 6 0 0 1 12 0C13 10 9.500 11 9.500 13.500z" fill="none" stroke="#dcdcdc" stroke-width="1.200"/><path d="M4.800 14h4.400v2.600L7 18.500 4.800 16.600z" fill="#dcdcdc"/></svg>
<div class="t b" style="left:1886px;top:88px;font-size:11px;color:#f0f0f0">L...</div>
<svg style="left:1859px;top:127px" width="17" height="17" viewBox="0 0 17 17"><rect x="0.600" y="0.600" width="12.800" height="12.800" rx="1" fill="none" stroke="#dcdcdc" stroke-width="1.100"/><rect x="3.100" y="3.100" width="13.300" height="13.300" rx="1" fill="#535353" stroke="#dcdcdc" stroke-width="1.100"/><path d="M9 3.500h4V10l-2-1.800L9 10z" fill="#dcdcdc"/></svg>
<div class="t b" style="left:1886px;top:129px;font-size:11px;color:#f0f0f0">Li...</div>
<div class="a" style="left:1562px;top:408px;width:284px;height:28px;background:#424242"></div>
<div class="a" style="left:1562px;top:408px;width:70px;height:28px;background:#535353"></div>
<div class="a" style="left:1562px;top:436px;width:284px;height:306px;background:#535353"></div>
<div class="a" style="left:1632px;top:408px;width:1px;height:27px;background:#3a3a3a"></div>
<div class="a" style="left:1714px;top:408px;width:1px;height:27px;background:#3a3a3a"></div>
<div class="a" style="left:1632px;top:435px;width:214px;height:1px;background:#3a3a3a"></div>
<div class="t b" style="left:1570px;top:413px;font-size:11px;color:#f0f0f0;letter-spacing:-0.08px">Properties</div>
<div class="t b" style="left:1640px;top:413px;font-size:11px;color:#a0a0a0;letter-spacing:-0.13px">Adjustments</div>
<svg style="left:1831px;top:418px" width="10" height="8" viewBox="0 0 10 8"><path d="M0 0.500h10M0 2.500h10M0 4.500h10M0 6.500h10" stroke="#c8c8c8" stroke-width="1" shape-rendering="crispEdges"/></svg>
<div class="a" style="left:1572px;top:442px;width:23px;height:23px;background:#3a3a3a;border:1px solid #5f5f5f;border-radius:3px"></div>
<svg style="left:1576px;top:447px" width="15" height="13" viewBox="0 0 15 13"><rect x="0.600" y="0.600" width="13.800" height="11.800" fill="none" stroke="#dcdcdc" stroke-width="1.200"/><path d="M2 10.500l3-4 2 2.500 2.500-3.500 3.500 5z" fill="#dcdcdc"/><circle cx="4.500" cy="3.800" r="1.100" fill="#dcdcdc"/></svg>
<div class="t" style="font-size:11px;left:1601px;top:446px;letter-spacing:-0.02px">Pixel Layer</div>
<div class="a" style="left:1562px;top:469px;width:284px;height:1px;background:#454545"></div>
<svg style="left:1569px;top:482px" width="8" height="5" viewBox="0 0 8 5"><path d="M0.500 0.500L4 4l3.500-3.500" fill="none" stroke="#c8c8c8" stroke-width="1.200"/></svg>
<div class="t b" style="left:1584px;top:477px;color:#f0f0f0;letter-spacing:-0.09px">Transform</div>
<svg style="left:1578px;top:524px" width="9" height="14" viewBox="0 0 9 14"><rect x="1.800" y="0.700" width="5.400" height="6" rx="2.500" fill="none" stroke="#dcdcdc" stroke-width="1.300"/><rect x="1.800" y="7.300" width="5.400" height="6" rx="2.500" fill="none" stroke="#dcdcdc" stroke-width="1.300"/><path d="M4.500 4.500v5" stroke="#dcdcdc" stroke-width="1.300"/></svg>
<div class="t" style="font-size:11px;left:1605px;top:508px;color:#c8c8c8">W</div>
<div class="inp" style="left:1622px;top:505px;width:57px;height:21px"></div>
<div class="t" style="font-size:11px;left:1625px;top:508px;color:#f0f0f0;letter-spacing:-0.01px">880 px</div>
<div class="t" style="font-size:11px;left:1695px;top:508px;color:#c8c8c8">X</div>
<div class="inp" style="left:1707px;top:505px;width:57px;height:21px"></div>
<div class="t" style="font-size:11px;left:1710px;top:508px;color:#f0f0f0;letter-spacing:-0.01px">656 px</div>
<div class="t" style="font-size:11px;left:1607px;top:537px;color:#c8c8c8">H</div>
<div class="inp" style="left:1622px;top:534px;width:57px;height:21px"></div>
<div class="t" style="font-size:11px;left:1625px;top:537px;color:#f0f0f0;letter-spacing:-0.11px">1375 px</div>
<div class="t" style="font-size:11px;left:1695px;top:537px;color:#c8c8c8">Y</div>
<div class="inp" style="left:1707px;top:534px;width:57px;height:21px"></div>
<div class="t" style="font-size:11px;left:1710px;top:537px;color:#f0f0f0;letter-spacing:0.10px">45 px</div>
<svg style="left:1603px;top:569px" width="13" height="11" viewBox="0 0 13 11"><path d="M12.500 10.300H0.800L9.500 1.200" fill="none" stroke="#dcdcdc" stroke-width="1.200"/><path d="M5.500 5.500a6 6 0 0 1 2 4.800" fill="none" stroke="#dcdcdc" stroke-width="1"/></svg>
<div class="a" style="left:1622px;top:567px;width:59px;height:19px;background:#454545;border:1px solid #666;border-radius:2px"></div>
<div class="a" style="left:1665px;top:568px;width:1px;height:17px;background:#666"></div>
<div class="t" style="font-size:11px;left:1625px;top:568px;color:#f0f0f0;letter-spacing:0.50px">0.00°</div>
<svg style="left:1669px;top:575px" width="8" height="5" viewBox="0 0 8 5"><path d="M0.500 0.500L4 4l3.500-3.500" fill="none" stroke="#c8c8c8" stroke-width="1.200"/></svg>
<svg style="left:1715px;top:569px" width="17" height="13" viewBox="0 0 17 13"><path d="M1 1.500v10l5-5z" fill="none" stroke="#dcdcdc" stroke-width="1.100"/><path d="M16 1.500v10l-5-5z" fill="#dcdcdc"/><path d="M8.500 0v13" stroke="#dcdcdc" stroke-width="1" stroke-dasharray="1 1"/></svg>
<svg style="left:1745px;top:567px" width="13" height="17" viewBox="0 0 13 17"><path d="M1.500 1h10l-5 5z" fill="none" stroke="#dcdcdc" stroke-width="1.100"/><path d="M1.500 16h10l-5-5z" fill="#dcdcdc"/><path d="M0 8.500h13" stroke="#dcdcdc" stroke-width="1" stroke-dasharray="1 1"/></svg>
<div class="a" style="left:1562px;top:598px;width:268px;height:1px;background:#454545"></div>
<svg style="left:1569px;top:612px" width="8" height="5" viewBox="0 0 8 5"><path d="M0.500 0.500L4 4l3.500-3.500" fill="none" stroke="#c8c8c8" stroke-width="1.200"/></svg>
<div class="t b" style="left:1586px;top:607px;color:#f0f0f0;letter-spacing:-0.19px">Align and Distribute</div>
<div class="t" style="font-size:11px;left:1571px;top:634px;color:#c8c8c8;letter-spacing:0.41px">Align:</div>
<svg style="left:1577px;top:663px" width="14" height="14" viewBox="0 0 14 14"><path d="M1 0v14" stroke="#dcdcdc" stroke-width="1.200"/><rect x="2.500" y="2" width="6" height="4" fill="#dcdcdc"/><rect x="2.500" y="8" width="10.500" height="4" fill="#dcdcdc"/></svg>
<svg style="left:1606px;top:663px" width="14" height="14" viewBox="0 0 14 14"><path d="M7 0v14" stroke="#dcdcdc" stroke-width="1.200"/><rect x="3.500" y="2" width="7" height="4" fill="#dcdcdc"/><rect x="1.500" y="8" width="11" height="4" fill="#dcdcdc"/></svg>
<svg style="left:1634px;top:663px" width="14" height="14" viewBox="0 0 14 14"><path d="M13 0v14" stroke="#dcdcdc" stroke-width="1.200"/><rect x="5.500" y="2" width="6" height="4" fill="#dcdcdc"/><rect x="1" y="8" width="10.500" height="4" fill="#dcdcdc"/></svg>
<svg style="left:1680px;top:663px" width="14" height="14" viewBox="0 0 14 14"><path d="M0 1h14" stroke="#dcdcdc" stroke-width="1.200"/><rect x="2" y="2.500" width="4" height="10.500" fill="#dcdcdc"/><rect x="8" y="2.500" width="4" height="6" fill="#dcdcdc"/></svg>
<svg style="left:1709px;top:663px" width="14" height="14" viewBox="0 0 14 14"><path d="M0 7h14" stroke="#dcdcdc" stroke-width="1.200"/><rect x="2" y="1.500" width="4" height="11" fill="#dcdcdc"/><rect x="8" y="3.500" width="4" height="7" fill="#dcdcdc"/></svg>
<svg style="left:1738px;top:663px" width="14" height="14" viewBox="0 0 14 14"><path d="M0 13h14" stroke="#dcdcdc" stroke-width="1.200"/><rect x="2" y="1" width="4" height="10.500" fill="#dcdcdc"/><rect x="8" y="5.500" width="4" height="6" fill="#dcdcdc"/></svg>
<svg style="left:1747px;top:699px" width="13" height="4" viewBox="0 0 13 4"><circle cx="2" cy="2" r="1.300" fill="#dcdcdc"/><circle cx="6.500" cy="2" r="1.300" fill="#dcdcdc"/><circle cx="11" cy="2" r="1.300" fill="#dcdcdc"/></svg>
<div class="a" style="left:1830px;top:470px;width:16px;height:245px;background:#4d4d4d"></div>
<div class="a" style="left:1832px;top:488px;width:12px;height:154px;background:#6b6b6b"></div>
<svg style="left:1835px;top:479px" width="7" height="4" viewBox="0 0 7 4"><path d="M0.500 3.500L3.500 0.500l3 3" fill="none" stroke="#9a9a9a" stroke-width="1"/></svg>
<svg style="left:1835px;top:704px" width="7" height="4" viewBox="0 0 7 4"><path d="M0.500 0.500L3.500 3.500l3-3" fill="none" stroke="#9a9a9a" stroke-width="1"/></svg>
<div class="a" style="left:1562px;top:714px;width:268px;height:1px;background:#454545"></div>
<div class="a" style="left:1562px;top:741px;width:284px;height:3px;background:#3a3a3a"></div>

<div class="a" style="left:1562px;top:744px;width:284px;height:28px;background:#424242"></div>
<div class="a" style="left:1562px;top:744px;width:50px;height:28px;background:#535353"></div>
<div class="a" style="left:1562px;top:772px;width:284px;height:306px;background:#535353"></div>
<div class="a" style="left:1612px;top:744px;width:1px;height:27px;background:#3a3a3a"></div>
<div class="a" style="left:1676px;top:744px;width:1px;height:27px;background:#3a3a3a"></div>
<div class="a" style="left:1723px;top:744px;width:1px;height:27px;background:#3a3a3a"></div>
<div class="a" style="left:1612px;top:771px;width:234px;height:1px;background:#3a3a3a"></div>
<div class="t b" style="left:1570px;top:749px;font-size:11px;color:#f0f0f0;letter-spacing:-0.51px">Layers</div>
<div class="t b" style="left:1620px;top:749px;font-size:11px;color:#a0a0a0;letter-spacing:-0.35px">Channels</div>
<div class="t b" style="left:1685px;top:749px;font-size:11px;color:#a0a0a0;letter-spacing:-0.49px">Paths</div>
<svg style="left:1831px;top:754px" width="10" height="8" viewBox="0 0 10 8"><path d="M0 0.500h10M0 2.500h10M0 4.500h10M0 6.500h10" stroke="#c8c8c8" stroke-width="1" shape-rendering="crispEdges"/></svg>
<div class="a" style="left:1566px;top:781px;width:93px;height:22px;background:#454545;border:1px solid #606060;border-radius:3px"></div>
<svg style="left:1574px;top:787px" width="11" height="11" viewBox="0 0 11 11"><circle cx="4.300" cy="4.300" r="3.300" fill="none" stroke="#dcdcdc" stroke-width="1.400"/><path d="M6.800 6.800L10.300 10.300" stroke="#dcdcdc" stroke-width="1.800"/></svg>
<div class="t" style="font-size:11px;left:1588px;top:783px;color:#f0f0f0;letter-spacing:0.17px">Kind</div>
<svg style="left:1647px;top:790px" width="8" height="5" viewBox="0 0 8 5"><path d="M0.500 0.500L4 4l3.500-3.500" fill="none" stroke="#c8c8c8" stroke-width="1.200"/></svg>
<svg style="left:1670px;top:785px" width="13" height="11" viewBox="0 0 13 11"><rect x="0.600" y="0.600" width="11.800" height="9.800" rx="1" fill="none" stroke="#dcdcdc" stroke-width="1.200"/><path d="M2 8.500l2.500-3 1.800 2 2-3 2.700 4z" fill="#dcdcdc"/></svg>
<svg style="left:1694px;top:785px" width="12" height="12" viewBox="0 0 12 12"><circle cx="6" cy="6" r="5.200" fill="none" stroke="#dcdcdc" stroke-width="1.300"/><path d="M9.700 2.300A5.200 5.200 0 0 1 2.300 9.700z" fill="#dcdcdc"/></svg>
<svg style="left:1719px;top:785px" width="12" height="12" viewBox="0 0 12 12"><path d="M0.500 0.500h11v3h-1.100l-0.400-1.400H7.200v8l1.500 0.400v1H3.300v-1l1.500-0.400v-8H2l-0.400 1.400H0.500z" fill="#dcdcdc"/></svg>
<svg style="left:1742px;top:784px" width="13" height="13" viewBox="0 0 13 13"><rect x="2" y="2" width="9" height="9" fill="none" stroke="#dcdcdc" stroke-width="1.300"/><rect x="0" y="0" width="3.600" height="3.600" fill="#dcdcdc"/><rect x="9.400" y="0" width="3.600" height="3.600" fill="#dcdcdc"/><rect x="0" y="9.400" width="3.600" height="3.600" fill="#dcdcdc"/><rect x="9.400" y="9.400" width="3.600" height="3.600" fill="#dcdcdc"/></svg>
<svg style="left:1767px;top:784px" width="12" height="13" viewBox="0 0 12 13"><path d="M3.500 0.600h5L11.400 3.500V10H3.500z" fill="none" stroke="#dcdcdc" stroke-width="1.200"/><rect x="0.500" y="6" width="6" height="6.500" fill="#dcdcdc"/><path d="M8 0.600V4h3.400" fill="none" stroke="#dcdcdc" stroke-width="1"/></svg>
<div class="a" style="left:1790px;top:783px;width:9px;height:17px;border-radius:5px;background:#3e3e3e;border:1px solid #5a5a5a"></div><div class="a" style="left:1791px;top:782px;width:8px;height:8px;border-radius:50%;background:#dcdcdc"></div>
<div class="a" style="left:1562px;top:804px;width:284px;height:1px;background:#454545"></div>
<div class="a" style="left:1566px;top:810px;width:126px;height:22px;background:#454545;border:1px solid #606060;border-radius:3px"></div>
<div class="t" style="font-size:11px;left:1574px;top:812px;color:#f0f0f0;letter-spacing:0.14px">Normal</div>
<svg style="left:1681px;top:819px" width="8" height="5" viewBox="0 0 8 5"><path d="M0.500 0.500L4 4l3.500-3.500" fill="none" stroke="#c8c8c8" stroke-width="1.200"/></svg>
<div class="t" style="font-size:11px;left:1697px;top:811px;color:#c8c8c8;letter-spacing:0.22px">Opacity:</div>
<div class="a" style="left:1745px;top:810px;width:53px;height:20px;background:#454545;border:1px solid #666;border-radius:2px"></div>
<div class="a" style="left:1783px;top:811px;width:1px;height:18px;background:#666"></div>
<div class="t" style="font-size:11px;left:1748px;top:812px;color:#f0f0f0;letter-spacing:0.01px">100%</div>
<svg style="left:1787px;top:818px" width="8" height="5" viewBox="0 0 8 5"><path d="M0.500 0.500L4 4l3.500-3.500" fill="none" stroke="#c8c8c8" stroke-width="1.200"/></svg>
<div class="a" style="left:1562px;top:833px;width:284px;height:1px;background:#454545"></div>
<div class="t" style="font-size:11px;left:1568px;top:840px;color:#c8c8c8;letter-spacing:0.24px">Lock:</div>
<div class="a" style="left:1598px;top:837px;width:21px;height:22px;background:#3a3a3a;border-radius:3px"></div>
<svg style="left:1603px;top:842px" width="12" height="12" viewBox="0 0 12 12"><rect x="0.500" y="0.500" width="10.600" height="10.600" fill="none" stroke="#dcdcdc" stroke-width="1"/><rect x="0.8" y="0.8" width="3.300" height="3.300" fill="#dcdcdc"/><rect x="0.8" y="7.4" width="3.300" height="3.300" fill="#dcdcdc"/><rect x="4.1" y="4.1" width="3.300" height="3.300" fill="#dcdcdc"/><rect x="7.4" y="0.8" width="3.300" height="3.300" fill="#dcdcdc"/><rect x="7.4" y="7.4" width="3.300" height="3.300" fill="#dcdcdc"/></svg>
<svg style="left:1624px;top:841px" width="14" height="14" viewBox="0 0 14 14"><path d="M13 0.500c-3 1.500-5.500 4.500-7 7l1.800 1.500C9.500 7 12 4 13 0.500z" fill="#dcdcdc"/><path d="M5.300 8.300c-2 0.200-2 2.500-4.300 3.700 2.500 1 5.500 0 6-2.400z" fill="#dcdcdc"/></svg>
<svg style="left:1646px;top:841px" width="13" height="13" viewBox="0 0 13 13"><path d="M6.500 0L4.300 2.600h1.600v3.300H2.600V4.300L0 6.500l2.600 2.200V7.100h3.300v3.300H4.300L6.500 13l2.200-2.600H7.100V7.100h3.300v1.600L13 6.500l-2.600-2.200v1.600H7.100V2.600h1.600z" fill="#dcdcdc"/></svg>
<svg style="left:1668px;top:842px" width="14" height="13" viewBox="0 0 14 13"><path d="M3 0v10h11M0 3h10.500v10" fill="none" stroke="#dcdcdc" stroke-width="1.300"/><path d="M4.500 1.500h7M12.500 4v5" stroke="#dcdcdc" stroke-width="1" stroke-dasharray="1.500 1"/></svg>
<svg style="left:1691px;top:841px" width="11" height="13" viewBox="0 0 11 13"><path d="M2.800 6V3.700a2.700 2.700 0 0 1 5.400 0V6" fill="none" stroke="#dcdcdc" stroke-width="1.400"/><rect x="0.500" y="5.500" width="10" height="7.500" rx="1" fill="#dcdcdc"/></svg>
<div class="t" style="font-size:11px;left:1722px;top:840px;color:#c8c8c8;letter-spacing:0.26px">Fill:</div>
<div class="a" style="left:1745px;top:838px;width:53px;height:20px;background:#454545;border:1px solid #666;border-radius:2px"></div>
<div class="a" style="left:1783px;top:839px;width:1px;height:18px;background:#666"></div>
<div class="t" style="font-size:11px;left:1748px;top:840px;color:#f0f0f0;letter-spacing:0.01px">100%</div>
<svg style="left:1787px;top:846px" width="8" height="5" viewBox="0 0 8 5"><path d="M0.500 0.500L4 4l3.500-3.500" fill="none" stroke="#c8c8c8" stroke-width="1.200"/></svg>
<div class="a" style="left:1562px;top:862px;width:284px;height:191px;background:#4d4d4d"></div>
<div class="a" style="left:1592px;top:865px;width:238px;height:40px;background:#6b6b6b"></div>
<div class="a" style="left:1562px;top:905px;width:268px;height:1px;background:#454545"></div>
<svg style="left:1570px;top:881px" width="15" height="10" viewBox="0 0 15 10"><path d="M0.500 5C3 0.500 12 0.500 14.500 5 12 9.500 3 9.500 0.500 5z" fill="#dcdcdc"/><circle cx="7.500" cy="5" r="2.800" fill="#4d4d4d"/><circle cx="7.500" cy="5" r="1.400" fill="#dcdcdc"/></svg>
<div class="a" style="left:1594px;top:867px;width:36px;height:36px;border:1px solid #f4f4f4"></div>
<div class="a" style="left:1595px;top:868px;width:34px;height:34px;border:2px solid #383838;background:#f7f7f5"></div>
<div class="a" style="left:1606px;top:866px;width:12px;height:3px;background:#6b6b6b"></div><div class="a" style="left:1606px;top:901px;width:12px;height:3px;background:#6b6b6b"></div><div class="a" style="left:1593px;top:880px;width:3px;height:12px;background:#6b6b6b"></div><div class="a" style="left:1628px;top:880px;width:3px;height:12px;background:#6b6b6b"></div>
<!--MINI-START--><svg style="left:1597px;top:870.500px" width="30" height="30" viewBox="382 186 781 781"><path d="M639.0 248.0C640.2 245.3 643.5 241.5 645.0 240.0C646.5 238.5 649.9 236.5 652.0 235.0C654.1 233.5 660.0 228.8 663.0 227.0C666.0 225.2 674.5 221.1 678.0 220.0C681.5 218.9 689.5 217.5 693.0 217.5C696.5 217.5 704.6 218.9 708.0 220.0C711.4 221.1 719.2 224.8 722.0 227.0C724.8 229.2 730.1 235.8 732.0 239.0C733.9 242.2 735.9 250.8 738.0 254.0C740.1 257.1 746.7 263.3 750.0 266.0C753.3 268.7 764.7 275.0 766.0 277.0C767.3 279.0 761.0 280.6 761.0 283.0C761.0 285.4 765.2 293.9 766.0 298.0C766.8 302.1 768.0 313.3 768.0 318.0C768.0 322.7 766.6 333.7 766.0 338.0C765.4 342.3 763.1 351.9 763.0 355.0C762.9 358.1 766.2 364.4 765.0 365.0C763.8 365.6 755.7 361.1 753.0 360.0C750.3 358.9 745.3 356.9 742.0 356.0C738.7 355.1 729.9 352.9 725.0 352.0C720.1 351.1 707.6 348.8 700.0 348.0C692.4 347.2 666.6 345.4 660.0 345.0C653.4 344.6 646.5 344.8 643.0 345.0C639.5 345.2 631.2 348.2 630.0 347.0C628.8 345.8 631.8 337.9 632.5 335.0C633.2 332.1 636.1 325.5 636.0 322.0C635.9 318.5 632.6 309.3 632.0 305.0C631.4 300.7 630.1 289.9 630.5 285.0C630.9 280.1 634.0 267.3 635.0 263.0C636.0 258.7 637.8 250.7 639.0 248.0Z" fill="#2a2420"/><path d="M617.0 360.0C614.1 358.6 604.3 368.6 600.0 373.0C595.7 377.4 584.3 392.5 580.0 398.0C575.7 403.5 566.5 415.4 563.0 420.0C559.5 424.6 553.7 437.7 550.0 437.5C546.3 437.3 534.7 422.8 531.0 418.5C527.3 414.2 521.2 404.4 518.5 400.5C515.8 396.6 511.1 386.1 508.0 385.0C504.9 383.9 495.1 389.9 492.0 391.0C488.9 392.1 481.8 393.2 481.0 394.5C480.2 395.8 483.7 399.6 485.0 402.0C486.3 404.4 489.7 411.1 492.0 415.0C494.3 418.9 502.0 430.7 505.0 435.0C508.0 439.3 515.1 448.4 518.0 452.0C520.9 455.6 527.3 463.3 530.0 466.0C532.7 468.7 537.9 474.7 541.0 475.5C544.1 476.3 552.5 474.9 557.0 472.5C561.5 470.1 575.0 459.1 580.0 455.0C585.0 450.9 596.3 441.3 600.0 437.0C603.7 432.7 609.9 421.4 612.0 418.0C614.1 414.6 616.5 411.9 618.0 408.0C619.5 404.1 625.1 390.6 625.0 385.0C624.9 379.4 619.9 361.4 617.0 360.0Z" fill="#b2f090"/><path d="M656.0 327.5C653.5 327.0 655.1 339.0 653.5 341.0C651.9 343.0 644.7 344.3 642.0 345.0C639.3 345.7 632.6 345.8 630.0 347.0C627.4 348.2 621.8 353.1 620.0 355.0C618.2 356.9 615.8 359.5 615.0 363.0C614.2 366.5 612.9 379.5 613.0 385.0C613.1 390.5 615.3 403.9 616.0 410.0C616.7 416.1 617.9 431.7 619.0 437.0C620.1 442.3 624.2 450.1 625.5 455.5C626.8 460.9 629.1 476.9 630.0 483.0C630.9 489.1 631.4 504.7 633.0 508.0C634.6 511.3 638.8 510.9 644.0 511.5C649.2 512.1 671.5 513.0 678.0 513.0C684.5 513.0 694.8 512.2 700.0 511.5C705.2 510.8 719.7 510.9 722.5 507.0C725.3 503.1 723.8 484.0 724.4 478.0C725.0 472.0 726.9 461.3 727.8 455.5C728.7 449.7 730.8 433.0 732.0 428.0C733.2 423.0 735.9 416.3 738.0 413.0C740.1 409.7 746.9 403.6 750.0 400.0C753.1 396.4 763.2 386.2 765.0 382.0C766.8 377.8 767.3 367.3 765.0 364.0C762.7 360.7 748.7 355.6 745.0 354.0C741.3 352.4 736.3 351.3 733.0 350.0C729.7 348.7 719.6 344.4 716.7 343.0C713.8 341.6 709.2 340.1 708.0 338.0C706.8 335.9 708.8 325.6 706.7 325.0C704.6 324.4 693.7 330.7 690.0 333.0C686.3 335.3 679.0 345.6 675.0 345.0C671.0 344.4 658.5 328.0 656.0 327.5Z" fill="#b2f090"/><path d="M717.0 347.0C719.9 343.9 734.8 351.2 740.0 353.0C745.2 354.8 755.0 359.4 762.0 362.0C769.0 364.6 791.2 371.5 800.0 375.0C808.8 378.5 829.8 388.3 837.0 392.0C844.2 395.7 856.2 402.3 862.0 407.0C867.8 411.7 881.2 425.6 887.0 432.0C892.8 438.4 906.3 455.4 912.0 462.0C917.7 468.6 935.4 484.1 936.0 489.0C936.6 493.9 921.7 503.9 917.5 504.0C913.3 504.1 905.0 494.3 900.0 490.0C895.0 485.7 880.8 472.2 875.0 467.0C869.2 461.8 855.8 449.3 850.0 445.0C844.2 440.7 832.4 432.9 825.0 430.0C817.6 427.1 796.3 422.3 787.0 420.0C777.7 417.7 752.2 410.0 745.0 410.0C737.8 410.0 728.5 423.5 725.0 420.0C721.5 416.5 715.9 388.5 715.0 380.0C714.1 371.5 714.1 350.1 717.0 347.0Z" fill="#b2f090"/><path d="M683.0 244.0C679.5 244.5 670.0 248.3 667.0 251.0C664.0 253.7 659.1 263.3 657.5 267.0C655.9 270.7 653.3 279.7 653.0 283.0C652.7 286.3 654.2 292.1 655.0 295.0C655.8 297.9 658.6 305.1 660.0 308.0C661.4 310.9 665.2 317.7 667.0 320.0C668.8 322.3 672.7 326.5 675.0 328.0C677.3 329.5 684.3 333.0 687.0 333.0C689.7 333.0 695.5 329.8 698.0 328.0C700.5 326.2 706.0 320.7 708.0 318.0C710.0 315.3 713.4 307.3 715.0 305.0C716.6 302.7 720.9 300.0 722.0 298.0C723.1 296.0 725.0 289.8 724.5 288.0C724.0 286.2 719.1 285.3 718.0 283.0C716.9 280.7 716.2 271.3 715.0 268.0C713.8 264.7 710.1 257.4 708.0 255.0C705.9 252.6 699.9 248.3 697.0 247.0C694.1 245.7 686.5 243.5 683.0 244.0Z" fill="#ecd0c0"/><path d="M639.0 248.0C640.2 245.3 643.5 241.5 645.0 240.0C646.5 238.5 649.9 236.5 652.0 235.0C654.1 233.5 660.0 228.8 663.0 227.0C666.0 225.2 674.5 221.1 678.0 220.0C681.5 218.9 689.5 217.5 693.0 217.5C696.5 217.5 704.6 218.9 708.0 220.0C711.4 221.1 719.2 224.8 722.0 227.0C724.8 229.2 730.1 235.8 732.0 239.0C733.9 242.2 738.2 251.1 738.0 254.0C737.8 256.9 732.0 261.9 730.0 264.0C728.0 266.1 722.9 272.7 721.0 272.0C719.1 271.3 716.2 260.8 714.0 258.0C711.8 255.2 705.4 249.7 702.0 248.0C698.6 246.3 689.0 243.4 685.0 243.5C681.0 243.6 671.1 246.8 668.0 249.0C664.9 251.2 659.6 258.6 658.0 262.0C656.4 265.4 655.0 273.6 654.0 278.0C653.0 282.4 650.5 298.4 649.0 300.0C647.5 301.6 642.6 296.3 641.0 292.0C639.4 287.7 635.2 268.1 635.0 263.0C634.8 257.9 637.8 250.7 639.0 248.0Z" fill="#3a302a"/><path d="M471.9 314.7C471.5 315.5 469.9 319.6 469.5 321.3C469.1 323.1 469.2 327.8 468.9 329.7C468.6 331.6 467.2 335.6 467.0 338.0C466.8 340.4 466.6 347.2 467.0 350.0C467.4 352.8 468.9 359.2 470.0 362.0C471.1 364.8 474.4 371.3 476.0 374.0C477.6 376.7 481.7 382.4 483.3 385.0C484.9 387.6 487.5 395.8 489.3 396.5C491.1 397.2 496.8 392.5 499.0 391.0C501.2 389.5 507.2 386.0 508.0 384.0C508.8 382.0 505.7 376.6 505.6 374.0C505.5 371.4 507.2 364.5 507.4 362.0C507.6 359.5 507.8 355.1 507.4 352.6C507.0 350.1 504.7 343.3 503.8 340.5C502.9 337.7 500.4 329.7 499.6 329.0C498.8 328.3 497.2 332.8 497.0 334.5C496.8 336.2 497.8 342.3 497.8 344.0C497.8 345.7 497.3 349.4 496.6 349.0C495.9 348.6 492.5 343.2 491.7 340.5C490.9 337.8 490.3 329.1 490.0 326.0C489.7 322.9 489.6 315.9 489.3 314.0C489.0 312.1 488.0 309.8 487.5 309.9C487.0 310.0 485.4 313.5 485.0 315.0C484.6 316.5 484.5 322.6 484.2 323.0C483.9 323.4 483.0 319.6 482.7 318.0C482.4 316.4 481.9 310.2 481.5 309.0C481.1 307.8 480.2 307.2 479.7 307.4C479.2 307.6 477.8 309.0 477.5 310.5C477.2 312.0 477.0 318.3 476.8 320.0C476.6 321.7 475.8 325.3 475.5 325.0C475.2 324.7 474.6 319.0 474.3 317.7C474.0 316.4 473.5 314.6 473.2 314.2C472.9 313.8 472.3 313.9 471.9 314.7Z" fill="#eab0a0"/><path d="M936.7 488.8C939.9 487.9 943.4 494.8 945.8 496.5C948.2 498.2 954.3 501.9 957.0 503.6C959.7 505.3 966.9 509.0 969.3 510.7C971.7 512.4 975.4 516.1 977.4 517.9C979.4 519.7 984.9 524.3 986.6 526.0C988.3 527.7 991.4 531.1 991.7 532.1C992.0 533.1 988.8 533.4 989.0 534.5C989.2 535.6 993.6 540.1 993.7 541.3C993.8 542.5 990.5 543.5 990.0 544.5C989.5 545.5 990.1 548.8 989.6 549.5C989.1 550.2 986.0 549.7 986.0 550.5C986.0 551.3 989.6 555.8 989.6 556.6C989.6 557.4 986.8 557.7 985.6 557.1C984.4 556.5 981.2 553.1 979.5 551.5C977.8 549.9 973.0 545.0 971.3 543.3C969.6 541.6 966.6 538.1 965.2 537.2C963.8 536.3 960.3 534.7 959.1 535.2C957.9 535.7 955.4 539.6 955.0 541.3C954.6 543.0 956.1 548.2 956.0 549.5C955.9 550.8 954.6 552.6 954.0 552.5C953.4 552.4 951.6 549.9 950.9 548.4C950.2 546.9 948.8 541.3 947.9 539.3C947.0 537.3 944.2 533.2 942.8 531.1C941.4 529.0 937.4 523.0 935.7 520.9C934.0 518.8 930.5 514.8 928.5 512.8C926.5 510.8 917.3 506.9 918.3 504.1C919.3 501.3 933.5 489.7 936.7 488.8Z" fill="#eab0a0"/><path d="M790.0 636.0C796.6 635.2 794.9 640.5 797.0 643.0C799.1 645.5 804.7 653.9 808.0 657.5C811.3 661.1 820.6 669.9 825.0 674.0C829.4 678.1 840.6 688.3 846.0 693.0C851.4 697.7 868.2 709.5 871.0 714.0C873.8 718.5 871.5 728.4 870.0 732.0C868.5 735.6 862.0 742.3 858.0 745.0C854.0 747.7 840.5 755.6 835.4 755.4C830.3 755.2 819.4 746.2 814.6 743.0C809.8 739.8 798.9 731.7 794.0 728.0C789.1 724.3 777.9 715.8 773.0 711.7C768.1 707.6 756.7 698.1 752.0 693.0C747.3 687.9 734.4 673.0 733.0 668.0C731.6 663.0 733.4 653.7 740.0 650.0C746.6 646.3 783.4 636.8 790.0 636.0Z" fill="#ecc8b6"/><path d="M871.0 714.0C873.0 712.8 883.2 720.0 887.5 722.0C891.8 724.0 903.2 729.0 908.0 731.5C912.8 734.0 924.1 740.0 929.0 743.0C933.9 746.0 945.1 753.4 950.0 757.5C954.9 761.6 966.1 773.2 971.0 778.0C975.9 782.8 987.2 794.1 991.7 799.0C996.2 803.9 1007.0 816.1 1010.0 820.0C1013.0 823.9 1016.1 829.0 1017.0 832.0C1017.9 835.0 1018.6 843.1 1018.0 846.0C1017.4 848.9 1013.9 855.4 1012.0 857.0C1010.1 858.6 1004.3 861.2 1001.7 860.0C999.1 858.8 993.7 850.4 990.0 846.7C986.3 843.0 975.2 832.3 970.0 828.0C964.8 823.7 951.0 813.6 945.0 810.0C939.0 806.4 924.5 800.2 919.0 797.0C913.5 793.8 902.9 785.6 898.0 782.5C893.1 779.4 881.9 772.2 877.0 770.0C872.1 767.8 860.9 765.4 856.0 763.7C851.1 762.0 835.2 757.6 835.4 755.4C835.6 753.2 854.0 747.7 858.0 745.0C862.0 742.3 868.5 735.6 870.0 732.0C871.5 728.4 869.0 715.2 871.0 714.0Z" fill="#bce878"/><path d="M649.2 540.0C650.6 536.0 658.7 532.8 663.3 530.8C667.9 528.8 682.5 524.0 688.3 522.5C694.1 521.0 709.0 519.0 713.3 518.3C717.6 517.6 723.2 515.7 725.0 516.7C726.8 517.7 726.9 524.5 728.3 526.7C729.7 528.9 734.2 533.9 736.7 535.8C739.2 537.7 746.9 541.3 750.0 543.3C753.1 545.3 760.4 550.6 763.3 553.3C766.2 556.0 772.7 563.2 775.0 566.7C777.3 570.2 781.7 579.0 783.3 583.3C784.9 587.6 787.1 598.4 788.3 603.3C789.5 608.2 792.3 620.5 793.3 625.0C794.3 629.5 797.1 638.8 796.7 641.7C796.3 644.6 792.9 648.1 790.0 650.0C787.1 651.9 776.8 656.5 771.7 658.3C766.6 660.0 751.6 663.9 746.7 665.0C741.8 666.1 732.3 667.5 730.0 667.5C727.7 667.5 727.9 665.9 726.7 665.0C725.5 664.1 721.8 661.7 720.0 660.0C718.2 658.3 715.2 654.1 711.7 650.8C708.2 647.5 695.4 637.2 690.0 632.0C684.6 626.8 668.8 609.7 665.0 606.5C661.2 603.3 657.9 606.3 657.5 604.2C657.1 602.1 663.0 589.9 661.7 588.3C660.4 586.7 648.9 592.0 646.7 590.8C644.5 589.6 641.9 581.3 642.5 578.3C643.1 575.3 650.9 569.5 651.7 565.0C652.5 560.5 647.8 544.0 649.2 540.0Z" fill="#0a0a0a"/><path d="M644.0 579.0C638.4 581.2 615.3 590.5 607.0 593.0C598.7 595.5 580.8 597.8 573.0 600.0C565.2 602.2 547.9 609.2 540.0 612.0C532.1 614.8 508.1 621.1 505.0 624.0C501.9 626.9 510.4 633.4 513.0 637.0C515.6 640.6 523.6 650.9 527.0 655.0C530.4 659.1 536.6 670.8 542.0 672.0C547.4 673.2 565.4 666.4 573.0 665.0C580.6 663.6 597.2 661.3 607.0 660.0C616.8 658.7 647.3 655.0 657.0 654.0C666.7 653.0 683.6 651.4 690.0 651.0C696.4 650.6 707.7 650.8 712.0 650.5C716.3 650.2 726.3 650.2 727.0 648.5C727.7 646.8 721.1 640.5 718.0 636.0C714.9 631.5 705.0 616.0 700.0 610.0C695.0 604.0 680.2 589.2 675.0 585.0C669.8 580.8 658.6 574.7 655.0 574.0C651.4 573.3 649.6 576.8 644.0 579.0Z" fill="#ecc8b6"/><path d="M505.0 624.0C502.3 623.5 492.7 630.5 490.0 633.0C487.3 635.5 483.2 642.2 482.0 645.0C480.8 647.8 479.9 653.7 480.0 657.0C480.1 660.3 481.7 669.1 482.5 673.0C483.3 676.9 485.9 684.9 487.0 690.0C488.1 695.1 490.7 711.2 492.0 717.0C493.3 722.8 496.5 733.8 498.0 740.0C499.5 746.2 503.8 764.4 505.0 770.0C506.2 775.6 507.4 782.7 508.5 788.0C509.6 793.3 513.0 809.1 514.0 815.5C515.0 821.9 516.8 837.2 517.0 843.0C517.2 848.8 513.8 862.1 516.0 865.5C518.2 868.9 531.9 871.6 536.0 872.0C540.1 872.4 549.0 873.2 551.0 869.0C553.0 864.8 553.0 842.2 553.0 836.0C553.0 829.8 551.5 821.1 551.0 815.5C550.5 809.9 549.4 794.5 549.0 788.0C548.6 781.5 547.6 765.6 547.4 760.0C547.2 754.4 547.2 744.3 547.0 740.0C546.8 735.7 546.5 726.5 546.0 723.0C545.5 719.5 543.7 713.9 543.0 710.0C542.3 706.1 540.6 693.9 540.0 690.0C539.4 686.1 537.8 679.1 538.0 677.0C538.2 674.9 543.3 674.6 542.0 672.0C540.7 669.4 530.4 659.1 527.0 655.0C523.6 650.9 515.6 640.6 513.0 637.0C510.4 633.4 507.7 624.5 505.0 624.0Z" fill="#b6e070"/></svg><!--MINI-END-->
<div class="t" style="font-size:11px;left:1637px;top:878px;color:#f0f0f0;letter-spacing:0.04px">Layer 1</div>
<svg style="left:1803px;top:879px" width="11" height="13" viewBox="0 0 11 13"><path d="M2.800 6V3.700a2.700 2.700 0 0 1 5.400 0V6" fill="none" stroke="#dcdcdc" stroke-width="1.200"/><rect x="1" y="5.600" width="9" height="6.800" rx="0.800" fill="none" stroke="#dcdcdc" stroke-width="1.200"/><rect x="4.500" y="8" width="2" height="2.500" fill="#dcdcdc"/></svg>
<div class="a" style="left:1562px;top:1053px;width:284px;height:1px;background:#454545"></div>
<div class="a" style="left:1562px;top:1054px;width:284px;height:24px;background:#535353"></div>
<svg style="left:1643px;top:1061px" width="15" height="9" viewBox="0 0 15 9"><rect x="0.700" y="1.500" width="7.500" height="6" rx="3" fill="none" stroke="#8c8c8c" stroke-width="1.300"/><rect x="6.800" y="1.500" width="7.500" height="6" rx="3" fill="none" stroke="#8c8c8c" stroke-width="1.300"/></svg>
<div class="t" style="left:1672px;top:1056px;font-family:'Liberation Serif',serif;font-style:italic;font-size:15px;line-height:18px;height:18px;color:#dcdcdc">fx</div>
<svg style="left:1684px;top:1072px" width="4" height="2" viewBox="0 0 4 2"><path d="M0 0h4L2 2z" fill="#dcdcdc"/></svg>
<svg style="left:1697px;top:1060px" width="14" height="11" viewBox="0 0 14 11"><rect x="0" y="0" width="14" height="11" rx="1" fill="#dcdcdc"/><circle cx="7" cy="5.500" r="3.300" fill="#535353"/></svg>
<svg style="left:1726px;top:1060px" width="12" height="12" viewBox="0 0 12 12"><circle cx="6" cy="6" r="5.200" fill="none" stroke="#dcdcdc" stroke-width="1.300"/><path d="M9.700 2.300A5.200 5.200 0 0 1 2.300 9.700z" fill="#dcdcdc"/></svg>
<svg style="left:1737px;top:1072px" width="4" height="2" viewBox="0 0 4 2"><path d="M0 0h4L2 2z" fill="#dcdcdc"/></svg>
<svg style="left:1752px;top:1060px" width="14" height="11" viewBox="0 0 14 11"><path d="M0 1a1 1 0 0 1 1-1h4l1.500 1.800H13a1 1 0 0 1 1 1V10a1 1 0 0 1-1 1H1a1 1 0 0 1-1-1z" fill="#dcdcdc"/></svg>
<svg style="left:1780px;top:1060px" width="12" height="12" viewBox="0 0 12 12"><rect x="0.600" y="0.600" width="10.800" height="10.800" rx="1" fill="none" stroke="#dcdcdc" stroke-width="1.200"/><path d="M6 3v6M3 6h6" stroke="#dcdcdc" stroke-width="1.300"/></svg>
<svg style="left:1807px;top:1059px" width="11" height="13" viewBox="0 0 11 13"><path d="M0 2.500h11M3.500 2.500V0.800h4V2.500" fill="none" stroke="#8c8c8c" stroke-width="1.200"/><path d="M1.300 3.500h8.400l-0.700 9H2z" fill="none" stroke="#8c8c8c" stroke-width="1.200"/><path d="M4 5v6M5.500 5v6M7 5v6" stroke="#8c8c8c" stroke-width="0.800"/></svg>


<!-- ===== STATUS BAR ===== -->
<div class="a" style="left:41px;top:1062px;width:1462px;height:16px;background:#4c4c4c"></div>
<div class="a" style="left:41px;top:1062px;width:48px;height:16px;background:#474747"></div>
<div class="a" style="left:89px;top:1062px;width:184px;height:16px;background:#515151"></div>
<div class="a" style="left:1503px;top:1062px;width:16px;height:16px;background:#4f4f4f"></div>
<div class="t" style="left:53px;top:1062px;color:#e0e0e0;font-size:11.500px;letter-spacing:-0.21px">50%</div>
<div class="t" style="left:110px;top:1062px;color:#e0e0e0;font-size:11.500px;letter-spacing:-0.28px">1562 px x 1535 px (72 ppi)</div>
<svg style="left:262px;top:1065px" width="6" height="10" viewBox="0 0 6 10"><path d="M1 0.500L5 5 1 9.500" fill="none" stroke="#c8c8c8" stroke-width="1.100"/></svg>
<div class="a" style="left:0;top:1078px;width:1920px;height:2px;background:#0e0e0e"></div>
<div class="a" style="left:685px;top:1078px;width:48px;height:2px;background:#3c3c3c"></div>
<div class="a" style="left:787px;top:1078px;width:27px;height:2px;background:#7a7628"></div>
<div class="a" style="left:814px;top:1078px;width:13px;height:2px;background:#3c3c3c"></div>

</body>
</html>
